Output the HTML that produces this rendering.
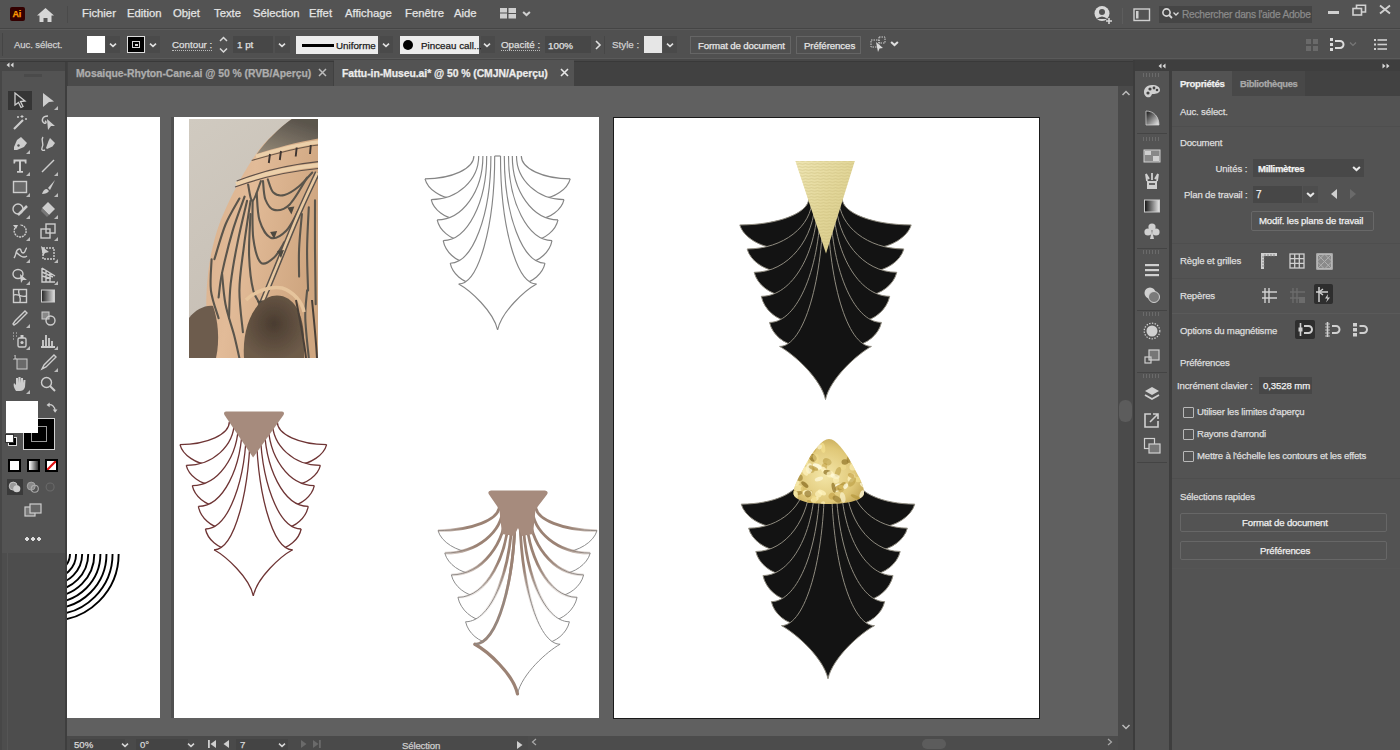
<!DOCTYPE html>
<html><head><meta charset="utf-8"><style>
html,body{margin:0;padding:0;width:1400px;height:750px;overflow:hidden;background:#535353;font-family:"Liberation Sans", sans-serif;}
.b{position:absolute;}
.t{position:absolute;white-space:nowrap;line-height:1.2;-webkit-text-stroke:0.25px currentColor;}
</style></head><body>
<div class="b" style="left:0px;top:0px;width:1400px;height:28px;background:#535353;"></div>
<div class="b" style="left:0px;top:28px;width:1400px;height:1px;background:#454545;"></div>
<div class="b" style="left:0px;top:29px;width:1400px;height:1px;background:#5a5a5a;"></div>
<div class="b" style="left:10px;top:7px;width:15px;height:14px;background:#330000;border-radius:2px;"></div>
<div class="t" style="left:12.5px;top:9.1px;font-size:9px;color:#ff9a00;font-weight:bold;letter-spacing:-0.2px;">Ai</div>
<svg class="b" style="left:36px;top:7px" width="19" height="16" viewBox="0 0 19 16"><path d="M9.5 1 L1 8.5 L3.5 8.5 L3.5 15 L7.5 15 L7.5 11 L11.5 11 L11.5 15 L15.5 15 L15.5 8.5 L18 8.5 Z" fill="#d6d6d6"/></svg>
<div class="b" style="left:67px;top:6px;width:1px;height:17px;background:#4a4a4a;"></div>
<div class="t" style="left:82px;top:6.7px;font-size:11.3px;color:#e4e4e4;font-weight:normal;letter-spacing:0px;">Fichier</div>
<div class="t" style="left:127px;top:6.7px;font-size:11.3px;color:#e4e4e4;font-weight:normal;letter-spacing:0px;">Edition</div>
<div class="t" style="left:173px;top:6.7px;font-size:11.3px;color:#e4e4e4;font-weight:normal;letter-spacing:0px;">Objet</div>
<div class="t" style="left:214px;top:6.7px;font-size:11.3px;color:#e4e4e4;font-weight:normal;letter-spacing:0px;">Texte</div>
<div class="t" style="left:253px;top:6.7px;font-size:11.3px;color:#e4e4e4;font-weight:normal;letter-spacing:0px;">Sélection</div>
<div class="t" style="left:309px;top:6.7px;font-size:11.3px;color:#e4e4e4;font-weight:normal;letter-spacing:0px;">Effet</div>
<div class="t" style="left:345px;top:6.7px;font-size:11.3px;color:#e4e4e4;font-weight:normal;letter-spacing:0px;">Affichage</div>
<div class="t" style="left:405px;top:6.7px;font-size:11.3px;color:#e4e4e4;font-weight:normal;letter-spacing:0px;">Fenêtre</div>
<div class="t" style="left:454px;top:6.7px;font-size:11.3px;color:#e4e4e4;font-weight:normal;letter-spacing:0px;">Aide</div>
<svg class="b" style="left:499px;top:7px" width="18" height="13" viewBox="0 0 18 13"><rect x="1" y="1" width="7" height="4.5" fill="#cfcfcf"/><rect x="1" y="6.5" width="7" height="5" fill="#cfcfcf"/><rect x="9.5" y="1" width="7.5" height="5" fill="#cfcfcf"/><rect x="9.5" y="7" width="7.5" height="4.5" fill="#cfcfcf"/></svg>
<svg class="b" style="left:521.5px;top:8.5px" width="9" height="9" viewBox="0 0 8 8"><path d="M1 2.6 L4 5.4 L7 2.6" fill="none" stroke="#d0d0d0" stroke-width="1.8"/></svg>
<svg class="b" style="left:1093px;top:5px" width="20" height="20" viewBox="0 0 20 20"><circle cx="9" cy="8.5" r="7.5" fill="#d8d8d8"/><circle cx="9" cy="7" r="3" fill="#535353"/><path d="M3.5 14 Q9 9 14.5 14" fill="#535353"/><path d="M13 16 h6 M16 13 v6" stroke="#d8d8d8" stroke-width="1.6"/></svg>
<div class="b" style="left:1122px;top:8px;width:1px;height:16px;background:#5d5d5d;"></div>
<svg class="b" style="left:1133px;top:8px" width="18" height="14" viewBox="0 0 18 14"><rect x="1" y="1" width="15.5" height="11.5" fill="none" stroke="#cfcfcf" stroke-width="1.4"/><rect x="3" y="3" width="2.5" height="7.5" fill="#cfcfcf"/></svg>
<div class="b" style="left:1159px;top:6px;width:153px;height:17px;background:#454545;"></div>
<svg class="b" style="left:1161px;top:7px" width="22" height="14" viewBox="0 0 22 14"><circle cx="5.5" cy="5.5" r="3.6" fill="none" stroke="#d8d8d8" stroke-width="1.6"/><path d="M8 8 L11 11" stroke="#d8d8d8" stroke-width="1.8"/><path d="M12.5 5.5 L15 8 L17.5 5.5" fill="none" stroke="#d8d8d8" stroke-width="1.3"/></svg>
<div class="t" style="left:1182px;top:9.2px;font-size:10.2px;color:#8a8a8a;font-weight:normal;letter-spacing:-0.25px;width:129px;overflow:hidden;white-space:nowrap;">Rechercher dans l'aide Adobe</div>
<div class="b" style="left:1328px;top:11px;width:11px;height:2.5px;background:#d0d0d0;"></div>
<svg class="b" style="left:1352px;top:4px" width="15" height="12" viewBox="0 0 15 12"><rect x="1" y="4.5" width="8.5" height="6.5" fill="none" stroke="#d0d0d0" stroke-width="1.6"/><path d="M4.5 4.5 V1.2 H13.5 V8 H9.5" fill="none" stroke="#d0d0d0" stroke-width="1.6"/></svg>
<svg class="b" style="left:1378px;top:4px" width="14" height="11" viewBox="0 0 14 11"><path d="M2 1.5 L12 9.5 M12 1.5 L2 9.5" stroke="#d0d0d0" stroke-width="1.9"/></svg>
<div class="b" style="left:0px;top:30px;width:1400px;height:28px;background:#505050;"></div>
<div class="b" style="left:0px;top:58px;width:1400px;height:1px;background:#5a5a5a;"></div>
<div class="b" style="left:0px;top:59px;width:1400px;height:2px;background:#474747;"></div>
<div class="b" style="left:0px;top:61px;width:1400px;height:1px;background:#393939;"></div>
<div class="b" style="left:2px;top:33px;width:1px;height:23px;background:#454545;"></div>
<div class="t" style="left:14px;top:39.2px;font-size:9.6px;color:#cfcfcf;font-weight:normal;letter-spacing:-0.1px;">Auc. sélect.</div>
<div class="b" style="left:87px;top:36px;width:18px;height:17px;background:#ffffff;"></div>
<div class="b" style="left:106px;top:36px;width:14px;height:17px;background:#4a4a4a;"></div>
<svg class="b" style="left:109.0px;top:40.5px" width="8" height="8" viewBox="0 0 8 8"><path d="M1 2.6 L4 5.4 L7 2.6" fill="none" stroke="#e0e0e0" stroke-width="1.6"/></svg>
<div class="b" style="left:127px;top:36px;width:18px;height:17px;background:#000000;box-sizing:border-box;border:1px solid #dcdcdc;"></div>
<div class="b" style="left:132px;top:41px;width:8px;height:7px;background:#000;box-sizing:border-box;border:1.5px solid #d8d8d8;"></div>
<div class="b" style="left:134.5px;top:43.5px;width:3px;height:2px;background:#d8d8d8;"></div>
<div class="b" style="left:146px;top:36px;width:14px;height:17px;background:#4a4a4a;"></div>
<svg class="b" style="left:149.0px;top:40.5px" width="8" height="8" viewBox="0 0 8 8"><path d="M1 2.6 L4 5.4 L7 2.6" fill="none" stroke="#e0e0e0" stroke-width="1.6"/></svg>
<div class="t" style="left:172px;top:39.1px;font-size:9.8px;color:#dedede;font-weight:normal;letter-spacing:0px;border-bottom:1px dotted #bbb;line-height:11px;">Contour :</div>
<svg class="b" style="left:218px;top:35px" width="11" height="20" viewBox="0 0 11 20"><path d="M2 6 L5.5 2.5 L9 6 M2 13.5 L5.5 17 L9 13.5" fill="none" stroke="#d8d8d8" stroke-width="1.5"/></svg>
<div class="b" style="left:233px;top:36px;width:40px;height:17px;background:#474747;"></div>
<div class="t" style="left:237px;top:39.1px;font-size:9.8px;color:#e0e0e0;font-weight:normal;letter-spacing:0px;">1 pt</div>
<div class="b" style="left:275px;top:36px;width:15px;height:17px;background:#4a4a4a;"></div>
<svg class="b" style="left:278.0px;top:40.5px" width="8" height="8" viewBox="0 0 8 8"><path d="M1 2.6 L4 5.4 L7 2.6" fill="none" stroke="#e0e0e0" stroke-width="1.6"/></svg>
<div class="b" style="left:296px;top:36px;width:82px;height:18px;background:#ececec;"></div>
<div class="b" style="left:302px;top:43.5px;width:32px;height:3px;background:#000;"></div>
<div class="t" style="left:336px;top:40.1px;font-size:9.8px;color:#1a1a1a;font-weight:normal;letter-spacing:0px;">Uniforme</div>
<div class="b" style="left:380px;top:36px;width:13px;height:17px;background:#4a4a4a;"></div>
<svg class="b" style="left:382.0px;top:40.5px" width="8" height="8" viewBox="0 0 8 8"><path d="M1 2.6 L4 5.4 L7 2.6" fill="none" stroke="#e0e0e0" stroke-width="1.6"/></svg>
<div class="b" style="left:400px;top:36px;width:79px;height:18px;background:#ececec;"></div>
<div class="b" style="left:403px;top:40px;width:10px;height:10px;border-radius:50%;background:#000"></div>
<div class="t" style="left:421px;top:39.6px;font-size:9.8px;color:#1a1a1a;font-weight:normal;letter-spacing:0px;">Pinceau call...</div>
<div class="b" style="left:481px;top:36px;width:14px;height:17px;background:#4a4a4a;"></div>
<svg class="b" style="left:483.0px;top:40.5px" width="8" height="8" viewBox="0 0 8 8"><path d="M1 2.6 L4 5.4 L7 2.6" fill="none" stroke="#e0e0e0" stroke-width="1.6"/></svg>
<div class="t" style="left:501px;top:39.1px;font-size:9.8px;color:#dedede;font-weight:normal;letter-spacing:0px;border-bottom:1px dotted #bbb;line-height:11px;">Opacité :</div>
<div class="b" style="left:545px;top:36px;width:46px;height:17px;background:#474747;"></div>
<div class="t" style="left:548px;top:39.6px;font-size:9.8px;color:#e0e0e0;font-weight:normal;letter-spacing:0px;">100%</div>
<svg class="b" style="left:594px;top:40px" width="8" height="10" viewBox="0 0 8 10"><path d="M2 1 L6 5 L2 9" fill="none" stroke="#e0e0e0" stroke-width="1.6"/></svg>
<div class="b" style="left:604px;top:36px;width:1px;height:18px;background:#474747;"></div>
<div class="t" style="left:612px;top:39.1px;font-size:9.8px;color:#cfcfcf;font-weight:normal;letter-spacing:0px;">Style :</div>
<div class="b" style="left:644px;top:36px;width:18px;height:17px;background:#e6e6e6;"></div>
<div class="b" style="left:663px;top:36px;width:14px;height:17px;background:#4a4a4a;"></div>
<svg class="b" style="left:666.0px;top:40.5px" width="8" height="8" viewBox="0 0 8 8"><path d="M1 2.6 L4 5.4 L7 2.6" fill="none" stroke="#e0e0e0" stroke-width="1.6"/></svg>
<div class="b" style="left:690px;top:36px;width:101px;height:18px;background:transparent;box-sizing:border-box;border:1px solid #656565;"></div>
<div class="t" style="left:698px;top:39.7px;font-size:9.7px;color:#e6e6e6;font-weight:normal;letter-spacing:-0.15px;">Format de document</div>
<div class="b" style="left:796px;top:36px;width:65px;height:18px;background:transparent;box-sizing:border-box;border:1px solid #656565;"></div>
<div class="t" style="left:804px;top:39.7px;font-size:9.7px;color:#e6e6e6;font-weight:normal;letter-spacing:-0.1px;">Préférences</div>
<svg class="b" style="left:870px;top:36px" width="18" height="17" viewBox="0 0 18 17"><rect x="1" y="4" width="8" height="7" fill="none" stroke="#cfcfcf" stroke-width="1" stroke-dasharray="1.5 1"/><rect x="9" y="1" width="6" height="6" fill="none" stroke="#cfcfcf" stroke-width="1" stroke-dasharray="1.5 1"/><path d="M6 6 L13 12 L9.5 12.5 L8 16 Z" fill="#dcdcdc"/></svg>
<svg class="b" style="left:889.5px;top:38.5px" width="9" height="9" viewBox="0 0 8 8"><path d="M1 2.6 L4 5.4 L7 2.6" fill="none" stroke="#e0e0e0" stroke-width="1.8"/></svg>
<svg class="b" style="left:1305px;top:38px" width="14" height="14" viewBox="0 0 14 14"><g fill="#6a6a6a"><rect x="1" y="1" width="5" height="5"/><rect x="8" y="1" width="5" height="5"/><rect x="1" y="8" width="5" height="5"/><rect x="8" y="8" width="5" height="5"/></g></svg>
<svg class="b" style="left:1329px;top:37px" width="16" height="16" viewBox="0 0 16 16"><g fill="#dcdcdc"><rect x="1" y="1" width="3" height="3"/><rect x="1" y="6" width="3" height="3"/><rect x="1" y="11" width="3" height="3"/></g><path d="M6 4 H11 A3.5 3.5 0 0 1 11 11 H6" fill="none" stroke="#dcdcdc" stroke-width="2"/></svg>
<svg class="b" style="left:1349.0px;top:40.0px" width="8" height="8" viewBox="0 0 8 8"><path d="M1 2.6 L4 5.4 L7 2.6" fill="none" stroke="#777" stroke-width="1.3"/></svg>
<svg class="b" style="left:1373px;top:38px" width="15" height="13" viewBox="0 0 15 13"><g fill="#d0d0d0"><rect x="1" y="1" width="2" height="2"/><rect x="1" y="5.5" width="2" height="2"/><rect x="1" y="10" width="2" height="2"/><rect x="4.5" y="1.2" width="9.5" height="1.6"/><rect x="4.5" y="5.7" width="9.5" height="1.6"/><rect x="4.5" y="10.2" width="9.5" height="1.6"/></g></svg>
<div class="b" style="left:67px;top:62px;width:1066px;height:24px;background:#414141;"></div>
<div class="b" style="left:68px;top:62px;width:265px;height:24px;background:#4a4a4a;"></div>
<div class="t" style="left:76px;top:68.3px;font-size:10.4px;color:#adadad;font-weight:bold;letter-spacing:-0.05px;">Mosaique-Rhyton-Cane.ai @ 50 % (RVB/Aperçu)</div>
<svg class="b" style="left:318px;top:68px" width="9" height="9" viewBox="0 0 9 9"><path d="M1 1 L8 8 M8 1 L1 8" stroke="#bcbcbc" stroke-width="1.5"/></svg>
<div class="b" style="left:334px;top:60px;width:240px;height:26px;background:#535353;"></div>
<div class="t" style="left:342px;top:68.3px;font-size:10.4px;color:#ececec;font-weight:bold;letter-spacing:-0.05px;">Fattu-in-Museu.ai* @ 50 % (CMJN/Aperçu)</div>
<svg class="b" style="left:560px;top:68px" width="9" height="9" viewBox="0 0 9 9"><path d="M1 1 L8 8 M8 1 L1 8" stroke="#e6e6e6" stroke-width="1.6"/></svg>
<div class="b" style="left:0px;top:62px;width:67px;height:688px;background:#474747;"></div>
<div class="b" style="left:2px;top:71px;width:63px;height:482px;background:#535353;"></div>
<div class="b" style="left:2px;top:553px;width:63px;height:197px;background:#4d4d4d;"></div>
<div class="b" style="left:7px;top:553px;width:1px;height:197px;background:#555;"></div>
<div class="b" style="left:65px;top:62px;width:2px;height:688px;background:#3e3e3e;"></div>
<svg class="b" style="left:6px;top:62px" width="8" height="6" viewBox="0 0 8 6"><path d="M3.5 0.5 L0.5 3 L3.5 5.5 Z M7.5 0.5 L4.5 3 L7.5 5.5 Z" fill="#d8d8d8"/></svg>
<div class="b" style="left:24px;top:74px;width:18px;height:3px;background:#4a4a4a;"></div>
<div class="b" style="left:67px;top:86px;width:1051px;height:650px;background:#606060;"></div>
<div class="b" style="left:67px;top:117px;width:93px;height:601px;background:#ffffff;"></div>
<div class="b" style="left:171px;top:117px;width:3px;height:601px;background:#505050;"></div>
<div class="b" style="left:174px;top:117px;width:425px;height:601px;background:#ffffff;"></div>
<div class="b" style="left:613px;top:117px;width:427px;height:602px;background:#ffffff;box-sizing:border-box;border:1px solid #1a1a1a;"></div>
<div class="b" style="left:67px;top:736px;width:1051px;height:14px;background:#4a4a4a;"></div>
<div class="b" style="left:1118px;top:86px;width:15px;height:650px;background:#4a4a4a;"></div>
<div class="b" style="left:1118px;top:736px;width:15px;height:14px;background:#4a4a4a;"></div>
<div class="b" style="left:1133px;top:60px;width:2px;height:690px;background:#3c3c3c;"></div>
<div class="b" style="left:1135px;top:60px;width:265px;height:11px;background:#3e3e3e;"></div>
<div class="b" style="left:1135px;top:71px;width:34px;height:679px;background:#535353;"></div>
<div class="b" style="left:1169px;top:71px;width:3px;height:679px;background:#3e3e3e;"></div>
<div class="b" style="left:1172px;top:71px;width:228px;height:679px;background:#535353;"></div>
<div class="b" style="left:1172px;top:71px;width:228px;height:25px;background:#424242;"></div>
<div class="b" style="left:1172px;top:71px;width:60px;height:25px;background:#535353;"></div>
<div class="b" style="left:1232px;top:71px;width:73px;height:25px;background:#484848;"></div>
<div class="t" style="left:1180px;top:78.2px;font-size:9.6px;color:#f0f0f0;font-weight:bold;letter-spacing:-0.3px;">Propriétés</div>
<div class="t" style="left:1240px;top:78.4px;font-size:9.4px;color:#a8a8a8;font-weight:bold;letter-spacing:-0.35px;">Bibliothèques</div>
<div class="b" style="left:7.5px;top:90.5px;width:24px;height:19px;background:#353535"></div>
<svg class="b" style="left:10.5px;top:91.0px" width="18" height="18" viewBox="0 0 18 18"><path d="M4 2 L14 10 L9.5 10.5 L12 15.5 L10 16.5 L7.5 11.5 L4 14 Z" fill="none" stroke="#cdcdcd" stroke-width="1.3"/></svg>
<svg class="b" style="left:38.5px;top:91.0px" width="18" height="18" viewBox="0 0 18 18"><path d="M4 2 L15 10.5 L10 11 L4 16 Z" fill="#cdcdcd"/></svg>
<svg class="b" style="left:53.5px;top:106px" width="4" height="4" viewBox="0 0 4 4"><path d="M4 0 V4 H0 Z" fill="#bbb"/></svg>
<svg class="b" style="left:10.5px;top:113.0px" width="18" height="18" viewBox="0 0 18 18"><path d="M3 16 L12 7" stroke="#cdcdcd" stroke-width="2.2"/><path d="M11 2 v3 M9.5 3.5 h3 M15 5 v2 M14 6 h2 M6 4 h2 M7 3 v2" stroke="#cdcdcd" stroke-width="1"/></svg>
<svg class="b" style="left:38.5px;top:113.0px" width="18" height="18" viewBox="0 0 18 18"><path d="M9 3 C3 3 2 8 5 10 C7 11 8 9 6 8" stroke="#cdcdcd" fill="none" stroke-width="1.4"/><path d="M8 6 L16 13 L12 13 L9 17 Z" fill="#cdcdcd"/></svg>
<svg class="b" style="left:10.5px;top:135.0px" width="18" height="18" viewBox="0 0 18 18"><path d="M10 2 L16 8 L13 12 L6 15 L3 15 L3 12 L6 5 Z" fill="#cdcdcd"/><circle cx="7.5" cy="10.5" r="1.2" fill="#535353"/></svg>
<svg class="b" style="left:25.5px;top:150px" width="4" height="4" viewBox="0 0 4 4"><path d="M4 0 V4 H0 Z" fill="#bbb"/></svg>
<svg class="b" style="left:38.5px;top:135.0px" width="18" height="18" viewBox="0 0 18 18"><path d="M11 3 L16 8 L13.5 11.5 L8 14 L7 13 L9.5 6 Z" fill="#cdcdcd"/><path d="M4 2 C1 6 6 8 3 13 C2 15 4 16 6 15" stroke="#cdcdcd" fill="none" stroke-width="1.4"/></svg>
<svg class="b" style="left:10.5px;top:156.5px" width="18" height="18" viewBox="0 0 18 18"><path d="M2.5 2.5 H15.5 V6.5 H14 L13.5 4.5 H10 V14 H12 V15.8 H6 V14 H8 V4.5 H4.5 L4 6.5 H2.5 Z" fill="#cdcdcd"/></svg>
<svg class="b" style="left:25.5px;top:171.5px" width="4" height="4" viewBox="0 0 4 4"><path d="M4 0 V4 H0 Z" fill="#bbb"/></svg>
<svg class="b" style="left:38.5px;top:156.5px" width="18" height="18" viewBox="0 0 18 18"><path d="M3 15 L15 3" stroke="#cdcdcd" stroke-width="1.5"/></svg>
<svg class="b" style="left:53.5px;top:171.5px" width="4" height="4" viewBox="0 0 4 4"><path d="M4 0 V4 H0 Z" fill="#bbb"/></svg>
<svg class="b" style="left:10.5px;top:178.0px" width="18" height="18" viewBox="0 0 18 18"><rect x="2.5" y="3.5" width="13" height="11" fill="#6a6a6a" stroke="#cdcdcd" stroke-width="1.4"/></svg>
<svg class="b" style="left:25.5px;top:193px" width="4" height="4" viewBox="0 0 4 4"><path d="M4 0 V4 H0 Z" fill="#bbb"/></svg>
<svg class="b" style="left:38.5px;top:178.0px" width="18" height="18" viewBox="0 0 18 18"><path d="M16 2 L9 10 L11 12 Z" fill="#cdcdcd"/><path d="M8 11 C5 11 4 13 3 16 C6 16 9 15 10 13 Z" fill="#cdcdcd"/></svg>
<svg class="b" style="left:53.5px;top:193px" width="4" height="4" viewBox="0 0 4 4"><path d="M4 0 V4 H0 Z" fill="#bbb"/></svg>
<svg class="b" style="left:10.5px;top:200.0px" width="18" height="18" viewBox="0 0 18 18"><circle cx="7" cy="9" r="5" stroke="#cdcdcd" fill="none" stroke-width="1.4"/><path d="M7 15 L16 6" stroke="#cdcdcd" stroke-width="2.5"/></svg>
<svg class="b" style="left:25.5px;top:215px" width="4" height="4" viewBox="0 0 4 4"><path d="M4 0 V4 H0 Z" fill="#bbb"/></svg>
<svg class="b" style="left:38.5px;top:200.0px" width="18" height="18" viewBox="0 0 18 18"><path d="M9 2 L16 9 L10 15 L3 8 Z" fill="#cdcdcd"/><path d="M3 8 L10 15 L8 17 L2 11 Z" fill="#777"/></svg>
<svg class="b" style="left:53.5px;top:215px" width="4" height="4" viewBox="0 0 4 4"><path d="M4 0 V4 H0 Z" fill="#bbb"/></svg>
<svg class="b" style="left:10.5px;top:222.0px" width="18" height="18" viewBox="0 0 18 18"><path d="M4 6 A6 6 0 1 0 9 3" stroke="#cdcdcd" fill="none" stroke-width="1.4" stroke-dasharray="2 0.8"/><path d="M2 3 L5 7 L7 3 Z" fill="#cdcdcd"/></svg>
<svg class="b" style="left:25.5px;top:237px" width="4" height="4" viewBox="0 0 4 4"><path d="M4 0 V4 H0 Z" fill="#bbb"/></svg>
<svg class="b" style="left:38.5px;top:222.0px" width="18" height="18" viewBox="0 0 18 18"><rect x="2" y="7" width="9" height="9" stroke="#cdcdcd" fill="none" stroke-width="1.4"/><rect x="7" y="2" width="9" height="9" stroke="#cdcdcd" fill="none" stroke-width="1.4"/></svg>
<svg class="b" style="left:53.5px;top:237px" width="4" height="4" viewBox="0 0 4 4"><path d="M4 0 V4 H0 Z" fill="#bbb"/></svg>
<svg class="b" style="left:10.5px;top:244.0px" width="18" height="18" viewBox="0 0 18 18"><path d="M3 14 C6 10 4 6 8 5 C11 4 9 9 12 9 C15 9 14 4 16 4 M5 8 C8 11 12 15 16 12" stroke="#cdcdcd" fill="none" stroke-width="1.4"/></svg>
<svg class="b" style="left:25.5px;top:259px" width="4" height="4" viewBox="0 0 4 4"><path d="M4 0 V4 H0 Z" fill="#bbb"/></svg>
<svg class="b" style="left:38.5px;top:244.0px" width="18" height="18" viewBox="0 0 18 18"><rect x="4" y="4" width="11" height="11" stroke="#cdcdcd" fill="none" stroke-width="1.4" stroke-dasharray="2 1"/><path d="M2 2 L10 8 L6 9 L4 12 Z" fill="#cdcdcd"/></svg>
<svg class="b" style="left:53.5px;top:259px" width="4" height="4" viewBox="0 0 4 4"><path d="M4 0 V4 H0 Z" fill="#bbb"/></svg>
<svg class="b" style="left:10.5px;top:265.5px" width="18" height="18" viewBox="0 0 18 18"><ellipse cx="7" cy="8" rx="5" ry="4.5" stroke="#cdcdcd" fill="none" stroke-width="1.4"/><path d="M9 8 L16 14 L12 14 L10 17 Z" fill="#cdcdcd"/></svg>
<svg class="b" style="left:25.5px;top:280.5px" width="4" height="4" viewBox="0 0 4 4"><path d="M4 0 V4 H0 Z" fill="#bbb"/></svg>
<svg class="b" style="left:38.5px;top:265.5px" width="18" height="18" viewBox="0 0 18 18"><path d="M3 2 V16 H16 M3 2 L16 10 M3 6 L14 11 M3 10 L12 12.5 M7 4.5 V16 M11 7 V16" stroke="#cdcdcd" fill="none" stroke-width="1.4" stroke-width="1.1"/></svg>
<svg class="b" style="left:53.5px;top:280.5px" width="4" height="4" viewBox="0 0 4 4"><path d="M4 0 V4 H0 Z" fill="#bbb"/></svg>
<svg class="b" style="left:10.5px;top:287.0px" width="18" height="18" viewBox="0 0 18 18"><rect x="2.5" y="2.5" width="13" height="13" stroke="#cdcdcd" fill="none" stroke-width="1.4"/><path d="M2.5 8 C7 6 10 11 15.5 9 M8 2.5 C6 7 11 10 9 15.5" stroke="#cdcdcd" fill="none" stroke-width="1.4" stroke-width="1"/></svg>
<svg class="b" style="left:38.5px;top:287.0px" width="18" height="18" viewBox="0 0 18 18"><defs><linearGradient id="tg" x1="0" x2="1"><stop offset="0" stop-color="#222"/><stop offset="1" stop-color="#e0e0e0"/></linearGradient></defs><rect x="2.5" y="3" width="13" height="12" fill="url(#tg)" stroke="#cdcdcd" stroke-width="1"/></svg>
<svg class="b" style="left:10.5px;top:309.0px" width="18" height="18" viewBox="0 0 18 18"><path d="M14 2 L16 4 L13 7 L6 14 L3 16 L2 15 L4 12 L11 5 Z" stroke="#cdcdcd" fill="none" stroke-width="1.4"/></svg>
<svg class="b" style="left:25.5px;top:324px" width="4" height="4" viewBox="0 0 4 4"><path d="M4 0 V4 H0 Z" fill="#bbb"/></svg>
<svg class="b" style="left:38.5px;top:309.0px" width="18" height="18" viewBox="0 0 18 18"><rect x="3" y="3" width="7" height="7" fill="#888" stroke="#cdcdcd" stroke-width="1"/><circle cx="11.5" cy="11.5" r="4.5" stroke="#cdcdcd" fill="none" stroke-width="1.4"/></svg>
<svg class="b" style="left:10.5px;top:331.0px" width="18" height="18" viewBox="0 0 18 18"><rect x="7" y="7" width="8" height="9" rx="1.5" stroke="#cdcdcd" fill="none" stroke-width="1.4"/><circle cx="11" cy="11.5" r="1.6" fill="#cdcdcd"/><rect x="9.5" y="4" width="3" height="3" fill="#cdcdcd"/><path d="M2 2 h1 M5 2 h1 M2 5 h1 M2 8 h1 M5 5 h1" stroke="#cdcdcd" stroke-width="1.2"/></svg>
<svg class="b" style="left:25.5px;top:346px" width="4" height="4" viewBox="0 0 4 4"><path d="M4 0 V4 H0 Z" fill="#bbb"/></svg>
<svg class="b" style="left:38.5px;top:331.0px" width="18" height="18" viewBox="0 0 18 18"><path d="M2 16 H16 M4 15 V9 M7 15 V4 M10 15 V7 M13 15 V10" stroke="#cdcdcd" stroke-width="1.8"/></svg>
<svg class="b" style="left:53.5px;top:346px" width="4" height="4" viewBox="0 0 4 4"><path d="M4 0 V4 H0 Z" fill="#bbb"/></svg>
<svg class="b" style="left:10.5px;top:353.0px" width="18" height="18" viewBox="0 0 18 18"><rect x="6" y="6" width="10" height="10" fill="#6a6a6a" stroke="#cdcdcd" stroke-width="1"/><path d="M4 2 V6 H2 M4 6 H6" stroke="#cdcdcd" stroke-width="1.2"/></svg>
<svg class="b" style="left:38.5px;top:353.0px" width="18" height="18" viewBox="0 0 18 18"><path d="M15 2 L17 4 L7 14 L3 16 L5 12 Z" stroke="#cdcdcd" fill="none" stroke-width="1.4"/></svg>
<svg class="b" style="left:53.5px;top:368px" width="4" height="4" viewBox="0 0 4 4"><path d="M4 0 V4 H0 Z" fill="#bbb"/></svg>
<svg class="b" style="left:10.5px;top:375.0px" width="18" height="18" viewBox="0 0 18 18"><path d="M5 16 C3 13 2 10 3 8 L5 10 L5 3 L7 3 L7 8 L7.5 2 L9.5 2 L9.5 8 L10 3 L12 3 L12 8 L12.5 5 L14.5 5 L14 12 C13 15 11 16 9 16 Z" fill="#cdcdcd"/></svg>
<svg class="b" style="left:25.5px;top:390px" width="4" height="4" viewBox="0 0 4 4"><path d="M4 0 V4 H0 Z" fill="#bbb"/></svg>
<svg class="b" style="left:38.5px;top:375.0px" width="18" height="18" viewBox="0 0 18 18"><circle cx="7.5" cy="7.5" r="5" stroke="#cdcdcd" fill="none" stroke-width="1.4" stroke-width="1.6"/><path d="M11 11 L16 16" stroke="#cdcdcd" stroke-width="2"/></svg>
<div class="b" style="left:23px;top:418px;width:32px;height:32px;background:#000;box-sizing:border-box;border:1px solid #d0d0d0"></div>
<div class="b" style="left:31px;top:426px;width:16px;height:16px;box-sizing:border-box;border:1.5px solid #9a9a9a"></div>
<div class="b" style="left:6px;top:401px;width:32px;height:32px;background:#fff"></div>
<svg class="b" style="left:44.5px;top:400.5px" width="14" height="14" viewBox="0 0 18 18"><path d="M4 5 C9 4 13 7 13 13" fill="none" stroke="#cdcdcd" stroke-width="1.6"/><path d="M10 11 L13 15 L16 11 Z M6 2 L2 5 L6 8 Z" fill="#cdcdcd"/></svg>
<div class="b" style="left:8px;top:437px;width:7px;height:7px;background:#000;border:1px solid #ddd"></div>
<div class="b" style="left:5px;top:434px;width:7px;height:7px;background:#fff;border:1px solid #333"></div>
<div class="b" style="left:8px;top:459px;width:13px;height:13px;background:#000"></div>
<div class="b" style="left:10px;top:461px;width:9px;height:9px;background:#fff"></div>
<div class="b" style="left:26.5px;top:459px;width:13px;height:13px;background:#000"></div>
<div class="b" style="left:28.5px;top:461px;width:9px;height:9px;background:linear-gradient(90deg,#fff,#333)"></div>
<div class="b" style="left:45px;top:459px;width:13px;height:13px;background:#000"></div>
<svg class="b" style="left:47px;top:461px" width="9" height="9" viewBox="0 0 9 9"><rect width="9" height="9" fill="#fff"/><path d="M0 9 L9 0" stroke="#e01010" stroke-width="2.2"/></svg>
<div class="b" style="left:6.5px;top:479px;width:16px;height:16px;background:#3a3a3a"></div>
<svg class="b" style="left:6.5px;top:479.0px" width="16" height="16" viewBox="0 0 18 18"><circle cx="7" cy="8" r="4.5" fill="#999" stroke="#cdcdcd" stroke-width="1"/><circle cx="11" cy="11" r="4" fill="#cdcdcd"/></svg>
<svg class="b" style="left:25.0px;top:479.0px" width="16" height="16" viewBox="0 0 18 18"><circle cx="7" cy="8" r="4.5" fill="#888" stroke="#aaa" stroke-width="1"/><circle cx="11" cy="11" r="4" fill="none" stroke="#aaa" stroke-width="1.2"/></svg>
<svg class="b" style="left:43.0px;top:479.0px" width="16" height="16" viewBox="0 0 18 18"><circle cx="8" cy="9" r="4.5" fill="none" stroke="#6a6a6a" stroke-width="1.2"/></svg>
<svg class="b" style="left:23.0px;top:502.0px" width="20" height="18" viewBox="0 0 18 18"><rect x="1" y="5" width="10" height="9" fill="#777" stroke="#cdcdcd" stroke-width="1.2"/><rect x="6" y="2" width="11" height="9" fill="#666" stroke="#cdcdcd" stroke-width="1.2"/></svg>
<div class="b" style="left:25px;top:537px;width:17px;height:4px;background:radial-gradient(circle at 2px 2px,#ddd 1.6px,transparent 1.8px) 0 0/6px 4px"></div>
<svg class="b" style="left:189px;top:119px" width="129" height="239" viewBox="189 119 129 239">
<defs>
<linearGradient id="pbg" x1="0" y1="0" x2="0.4" y2="1"><stop offset="0" stop-color="#d0cac0"/><stop offset="1" stop-color="#c6beb4"/></linearGradient>
<linearGradient id="pbody" x1="0" y1="0" x2="1" y2="0.4"><stop offset="0" stop-color="#d8b08c"/><stop offset="0.45" stop-color="#e2bb98"/><stop offset="1" stop-color="#cfa680"/></linearGradient>
<linearGradient id="pdome" x1="0" y1="1" x2="0.6" y2="0"><stop offset="0" stop-color="#968a78"/><stop offset="1" stop-color="#5a544c"/></linearGradient>
<filter id="pblur" x="-5%" y="-5%" width="110%" height="110%"><feGaussianBlur stdDeviation="0.75"/></filter>
<radialGradient id="pblob" cx="0.5" cy="0.45" r="0.6"><stop offset="0" stop-color="#4a3c30"/><stop offset="1" stop-color="#6e5c4a"/></radialGradient>
</defs>
<rect x="189" y="119" width="129" height="239" fill="url(#pbg)"/>
<g filter="url(#pblur)">
<path d="M291.7 119 C276 131 264 142 256.7 153.3 C246 168 234 190 223.7 213.3 C216 230 210 255 208 274 C206.5 288 206.3 300 206.3 304 L207 358 L318.3 358 L318.3 119 Z" fill="url(#pbody)"/>
<path d="M291.7 119 C278 129 266 141 256.7 154 C275 148 298 142 318.3 138.5 L318.3 119 Z" fill="url(#pdome)"/>
<path d="M256 156.5 C276 150.5 298 144.5 318.3 142" fill="none" stroke="#ecd0aa" stroke-width="3.5"/>
<path d="M251.7 160.5 C274 154 298 147.5 318.3 145" fill="none" stroke="#6a5848" stroke-width="1.1"/>
<path d="M236 184 C262 174 292 167.5 318.3 165" fill="none" stroke="#ecd0aa" stroke-width="4"/>
<path d="M236.7 181 C262 171 292 164.5 318.3 161.7 M235 187 C262 177 292 171 318.3 168.5" fill="none" stroke="#5e5048" stroke-width="1.2"/>
<path d="M270 154 l-1.2 9 M281 151 l-1.2 9 M296.7 147.5 l-1 9 M310.8 145 l-0.8 9" stroke="#3e3430" stroke-width="1.9"/>
<g fill="none" stroke="#5a544c" stroke-width="2.1" stroke-linecap="round"><path d="M248.1 184.6 C248.8 187.3 250.4 201.5 252.6 200.9 C254.7 200.3 259.5 184.4 260.9 181.1"/><path d="M263.0 181.1 C263.4 184.2 263.6 194.7 265.4 199.5 C267.3 204.3 270.0 209.1 274.1 209.9 C278.1 210.7 284.2 209.8 289.7 204.4 C295.2 199.0 304.2 182.1 307.1 177.7"/><path d="M267.8 179.4 C268.8 181.6 270.6 190.0 273.4 192.6 C276.2 195.2 280.2 196.1 284.5 195.0 C288.8 194.0 294.5 190.1 299.1 186.3 C303.7 182.6 310.1 174.8 312.3 172.5"/><path d="M256.7 193.3 C257.2 197.8 257.2 212.9 259.5 220.3 C261.8 227.7 266.2 236.0 270.6 237.7 C275.1 239.4 281.6 235.3 286.2 230.7 C290.9 226.2 296.4 214.0 298.4 210.6"/><path d="M252.6 200.9 C252.7 207.2 251.9 228.1 253.3 238.4 C254.7 248.7 257.4 259.5 260.9 262.7 C264.4 265.9 270.2 260.9 274.1 257.5 C278.0 254.0 282.8 244.5 284.5 241.9"/><path d="M250.5 214.1 C250.3 221.0 248.6 243.0 249.1 255.7 C249.6 268.5 251.1 282.0 253.3 290.4 C255.4 298.8 260.5 303.4 262.0 306.0"/><path d="M244.6 196.7 C242.6 202.5 236.2 218.7 232.5 231.4 C228.7 244.2 224.4 262.1 222.0 273.1 C219.7 284.1 219.2 293.3 218.6 297.4"/><path d="M239.4 198.5 C237.1 202.8 229.7 214.4 225.5 224.5 C221.4 234.6 216.3 253.4 214.4 259.2"/><path d="M247.0 200.9 C245.5 207.7 240.4 228.1 237.7 241.9 C234.9 255.6 232.2 270.8 230.7 283.5 C229.3 296.2 229.3 312.4 229.0 318.2"/><path d="M250.5 200.9 C249.3 208.9 245.4 233.9 243.6 248.8 C241.7 263.7 239.5 276.6 239.4 290.4 C239.3 304.3 242.3 325.1 242.9 332.1"/><path d="M222.0 273.1 C222.6 278.3 223.5 293.9 225.5 304.3 C227.5 314.7 231.9 326.6 234.2 335.5 C236.5 344.5 238.5 354.3 239.4 358.1"/><path d="M211.6 259.2 C211.5 264.4 209.8 280.6 210.9 290.4 C212.1 300.3 217.3 313.6 218.6 318.2"/><path d="M301.9 214.1 C301.4 219.9 299.5 238.4 299.1 248.8 C298.6 259.2 299.1 271.9 299.1 276.6"/><path d="M308.8 207.2 C308.5 214.1 307.2 234.9 307.1 248.8 C306.9 262.7 307.9 283.5 308.1 290.4"/><path d="M315.0 200.2 C315.0 208.3 314.9 231.4 315.0 248.8 C315.2 266.1 315.6 295.1 315.7 304.3"/><path d="M307.1 290.4 C306.8 295.1 305.0 306.9 305.3 318.2 C305.6 329.5 308.2 351.4 308.8 358.1"/></g><path d="M317.5 172.5 C314.3 179.4 305.6 197.3 298.4 214.1 C291.2 230.9 282.2 253.4 274.1 273.1 C266.0 292.7 253.9 322.2 249.8 332.1" fill="none" stroke="#5a524c" stroke-width="5.5"/><path d="M317.5 172.5 C314.3 179.4 305.6 197.3 298.4 214.1 C291.2 230.9 282.2 253.4 274.1 273.1 C266.0 292.7 253.9 322.2 249.8 332.1" fill="none" stroke="#e8c8a0" stroke-width="2.6"/><path d="M277.0 251.0 L284.0 250.0 L281.0 258.0 Z" fill="#4e4840"/><path d="M256.9 301.3 L263.9 300.3 L260.9 308.3 Z" fill="#4e4840"/><path d="M287.4 207.6 L294.4 206.6 L291.4 214.6 Z" fill="#4e4840"/><path d="M270.1 231.9 L277.1 230.9 L274.1 238.9 Z" fill="#4e4840"/>




<path d="M246 300 C256 290 272 286 282 288 C294 292 302 302 304 312" fill="none" stroke="#e6c49c" stroke-width="3.5"/>
<path d="M244 358 C242 330 252 302 272 296 C292 292 304 312 304 340 L304 358 Z" fill="url(#pblob)"/>
<path d="M189 318 C195 310 205 305 213 306 C218 320 220 340 216 358 L189 358 Z" fill="#6d5c4e"/>
<path d="M296 300 C300 320 304 340 306 358 M312 300 C314 320 316 340 317 358" fill="none" stroke="#4a4038" stroke-width="2"/>
</g>
</svg>
<svg class="b" style="left:67px;top:550px" width="60" height="75" viewBox="67 550 60 75"><g fill="none" stroke="#000" stroke-width="1.9"><path d="M70.00 554 A18.00 18.00 0 0 1 52 572.00"/><path d="M76.08 554 A24.08 24.08 0 0 1 52 578.08"/><path d="M82.16 554 A30.16 30.16 0 0 1 52 584.16"/><path d="M88.24 554 A36.24 36.24 0 0 1 52 590.24"/><path d="M94.32 554 A42.32 42.32 0 0 1 52 596.32"/><path d="M100.40 554 A48.40 48.40 0 0 1 52 602.40"/><path d="M106.48 554 A54.48 54.48 0 0 1 52 608.48"/><path d="M112.56 554 A60.56 60.56 0 0 1 52 614.56"/><path d="M118.64 554 A66.64 66.64 0 0 1 52 620.64"/></g></svg>
<svg class="b" style="left:0;top:0" width="1118" height="736" viewBox="0 0 1118 736">
<defs>
<radialGradient id="gstroke" gradientUnits="userSpaceOnUse" cx="517" cy="515" r="115" fx="517" fy="515"><stop offset="0" stop-color="#9b8274" stop-opacity="1"/><stop offset="0.45" stop-color="#9b8274" stop-opacity="1"/><stop offset="0.72" stop-color="#9b8274" stop-opacity="0.25"/><stop offset="1" stop-color="#9b8274" stop-opacity="0"/></radialGradient>
<linearGradient id="gt" x1="0" y1="0" x2="1" y2="1"><stop offset="0" stop-color="#efe6b4"/><stop offset="0.5" stop-color="#e2d698"/><stop offset="1" stop-color="#d6c888"/></linearGradient>
<pattern id="gtex" width="6" height="3" patternUnits="userSpaceOnUse"><rect width="6" height="3" fill="none"/><path d="M0 2 C2 1 4 3 6 2" stroke="#c9bb7a" stroke-width="0.5" fill="none"/></pattern>
<radialGradient id="gh" cx="0.45" cy="0.55" r="0.7"><stop offset="0" stop-color="#f4e6a8"/><stop offset="0.6" stop-color="#e0c878"/><stop offset="1" stop-color="#b89a48"/></radialGradient>
<pattern id="ham" width="9" height="8" patternUnits="userSpaceOnUse"><circle cx="3" cy="3" r="2.2" fill="#fff6c8" opacity="0.6"/><circle cx="7" cy="6.5" r="1.8" fill="#7a5c20" opacity="0.45"/></pattern>
</defs>
<path d="M473.90,156.00 C473.90,168.59 451.99,178.80 425.00,178.80 C427.77,189.65 441.62,198.13 452.70,198.52 L497.60,200.52 L542.50,198.52 C553.58,198.13 567.43,189.65 570.20,178.80 C543.21,178.80 521.30,168.59 521.30,156.00 Z" fill="#fff"/>
<path d="M425.00,178.80 C427.77,189.65 441.62,198.13 452.70,198.52 M570.20,178.80 C567.43,189.65 553.58,198.13 542.50,198.52" fill="none" stroke="#858585" stroke-width="1.15"/>
<path d="M473.90,156.00 C473.90,168.59 451.99,178.80 425.00,178.80 M521.30,156.00 C521.30,168.59 543.21,178.80 570.20,178.80" fill="none" stroke="#858585" stroke-width="1.15"/>
<path d="M478.70,156.00 C478.70,180.07 457.42,199.60 431.20,199.60 C433.64,210.15 445.85,218.40 455.61,218.78 L497.60,220.78 L539.59,218.78 C549.35,218.40 561.56,210.15 564.00,199.60 C537.78,199.60 516.50,180.07 516.50,156.00 Z" fill="#fff"/>
<path d="M431.20,199.60 C433.64,210.15 445.85,218.40 455.61,218.78 M564.00,199.60 C561.56,210.15 549.35,218.40 539.59,218.78" fill="none" stroke="#858585" stroke-width="1.15"/>
<path d="M478.70,156.00 C478.70,180.07 457.42,199.60 431.20,199.60 M516.50,156.00 C516.50,180.07 537.78,199.60 564.00,199.60" fill="none" stroke="#858585" stroke-width="1.15"/>
<path d="M482.90,156.00 C482.90,191.22 462.43,219.80 437.20,219.80 C439.46,230.65 450.75,239.13 459.79,239.52 L497.60,241.52 L535.41,239.52 C544.45,239.13 555.74,230.65 558.00,219.80 C532.77,219.80 512.30,191.22 512.30,156.00 Z" fill="#fff"/>
<path d="M437.20,219.80 C439.46,230.65 450.75,239.13 459.79,239.52 M558.00,219.80 C555.74,230.65 544.45,239.13 535.41,239.52" fill="none" stroke="#858585" stroke-width="1.15"/>
<path d="M482.90,156.00 C482.90,191.22 462.43,219.80 437.20,219.80 M512.30,156.00 C512.30,191.22 532.77,219.80 558.00,219.80" fill="none" stroke="#858585" stroke-width="1.15"/>
<path d="M486.70,156.00 C486.70,202.70 467.21,240.60 443.20,240.60 C445.43,252.34 456.59,261.51 465.51,261.94 L497.60,263.94 L529.69,261.94 C538.61,261.51 549.77,252.34 552.00,240.60 C527.99,240.60 508.50,202.70 508.50,156.00 Z" fill="#fff"/>
<path d="M443.20,240.60 C445.43,252.34 456.59,261.51 465.51,261.94 M552.00,240.60 C549.77,252.34 538.61,261.51 529.69,261.94" fill="none" stroke="#858585" stroke-width="1.15"/>
<path d="M486.70,156.00 C486.70,202.70 467.21,240.60 443.20,240.60 M508.50,156.00 C508.50,202.70 527.99,240.60 552.00,240.60" fill="none" stroke="#858585" stroke-width="1.15"/>
<path d="M490.90,156.00 C490.90,215.17 472.67,263.20 450.20,263.20 C452.40,274.05 463.38,282.53 472.16,282.92 L497.60,284.92 L523.04,282.92 C531.82,282.53 542.80,274.05 545.00,263.20 C522.53,263.20 504.30,215.17 504.30,156.00 Z" fill="#fff"/>
<path d="M450.20,263.20 C452.40,274.05 463.38,282.53 472.16,282.92 M545.00,263.20 C542.80,274.05 531.82,282.53 523.04,282.92" fill="none" stroke="#858585" stroke-width="1.15"/>
<path d="M490.90,156.00 C490.90,215.17 472.67,263.20 450.20,263.20 M504.30,156.00 C504.30,215.17 522.53,263.20 545.00,263.20" fill="none" stroke="#858585" stroke-width="1.15"/>
<path d="M494.70,156.00 C494.70,226.66 478.57,284.00 458.70,284.00 C470.37,290.44 493.71,311.60 497.60,330.00 C501.49,311.60 524.83,290.44 536.50,284.00 C516.63,284.00 500.50,226.66 500.50,156.00 Z" fill="#fff"/>
<path d="M458.70,284.00 C470.37,290.44 493.71,311.60 497.60,330.00 M536.50,284.00 C524.83,290.44 501.49,311.60 497.60,330.00" fill="none" stroke="#858585" stroke-width="1.15"/>
<path d="M494.70,156.00 C494.70,226.66 478.57,284.00 458.70,284.00 M500.50,156.00 C500.50,226.66 516.63,284.00 536.50,284.00" fill="none" stroke="#858585" stroke-width="1.15"/>
<path d="M494.70,156.00 L500.50,156.00" fill="none" stroke="#858585" stroke-width="1.15"/>
<path d="M229.36,421.80 C229.36,434.39 207.24,444.60 179.97,444.60 C182.77,455.45 196.76,463.93 207.95,464.32 L253.30,466.32 L298.65,464.32 C309.84,463.93 323.83,455.45 326.63,444.60 C299.36,444.60 277.24,434.39 277.24,421.80 Z" fill="#fff"/>
<path d="M179.97,444.60 C182.77,455.45 196.76,463.93 207.95,464.32 M326.63,444.60 C323.83,455.45 309.84,463.93 298.65,464.32" fill="none" stroke="#6e3434" stroke-width="1.3"/>
<path d="M229.36,421.80 C229.36,434.39 207.24,444.60 179.97,444.60 M277.24,421.80 C277.24,434.39 299.36,444.60 326.63,444.60" fill="none" stroke="#6e3434" stroke-width="1.3"/>
<path d="M234.21,421.80 C234.21,445.87 212.72,465.40 186.24,465.40 C188.70,475.95 201.03,484.20 210.89,484.58 L253.30,486.58 L295.71,484.58 C305.57,484.20 317.90,475.95 320.36,465.40 C293.88,465.40 272.39,445.87 272.39,421.80 Z" fill="#fff"/>
<path d="M186.24,465.40 C188.70,475.95 201.03,484.20 210.89,484.58 M320.36,465.40 C317.90,475.95 305.57,484.20 295.71,484.58" fill="none" stroke="#6e3434" stroke-width="1.3"/>
<path d="M234.21,421.80 C234.21,445.87 212.72,465.40 186.24,465.40 M272.39,421.80 C272.39,445.87 293.88,465.40 320.36,465.40" fill="none" stroke="#6e3434" stroke-width="1.3"/>
<path d="M238.45,421.80 C238.45,457.02 217.77,485.60 192.30,485.60 C194.58,496.45 205.98,504.93 215.11,505.32 L253.30,507.32 L291.49,505.32 C300.62,504.93 312.02,496.45 314.30,485.60 C288.83,485.60 268.15,457.02 268.15,421.80 Z" fill="#fff"/>
<path d="M192.30,485.60 C194.58,496.45 205.98,504.93 215.11,505.32 M314.30,485.60 C312.02,496.45 300.62,504.93 291.49,505.32" fill="none" stroke="#6e3434" stroke-width="1.3"/>
<path d="M238.45,421.80 C238.45,457.02 217.77,485.60 192.30,485.60 M268.15,421.80 C268.15,457.02 288.83,485.60 314.30,485.60" fill="none" stroke="#6e3434" stroke-width="1.3"/>
<path d="M242.29,421.80 C242.29,468.50 222.61,506.40 198.36,506.40 C200.61,518.14 211.88,527.31 220.89,527.74 L253.30,529.74 L285.71,527.74 C294.72,527.31 305.99,518.14 308.24,506.40 C283.99,506.40 264.31,468.50 264.31,421.80 Z" fill="#fff"/>
<path d="M198.36,506.40 C200.61,518.14 211.88,527.31 220.89,527.74 M308.24,506.40 C305.99,518.14 294.72,527.31 285.71,527.74" fill="none" stroke="#6e3434" stroke-width="1.3"/>
<path d="M242.29,421.80 C242.29,468.50 222.61,506.40 198.36,506.40 M264.31,421.80 C264.31,468.50 283.99,506.40 308.24,506.40" fill="none" stroke="#6e3434" stroke-width="1.3"/>
<path d="M246.53,421.80 C246.53,480.97 228.12,529.00 205.43,529.00 C207.64,539.85 218.74,548.33 227.61,548.72 L253.30,550.72 L278.99,548.72 C287.86,548.33 298.96,539.85 301.17,529.00 C278.48,529.00 260.07,480.97 260.07,421.80 Z" fill="#fff"/>
<path d="M205.43,529.00 C207.64,539.85 218.74,548.33 227.61,548.72 M301.17,529.00 C298.96,539.85 287.86,548.33 278.99,548.72" fill="none" stroke="#6e3434" stroke-width="1.3"/>
<path d="M246.53,421.80 C246.53,480.97 228.12,529.00 205.43,529.00 M260.07,421.80 C260.07,480.97 278.48,529.00 301.17,529.00" fill="none" stroke="#6e3434" stroke-width="1.3"/>
<path d="M250.37,421.80 C250.37,492.46 234.08,549.80 214.01,549.80 C225.80,556.24 249.37,577.40 253.30,595.80 C257.23,577.40 280.80,556.24 292.59,549.80 C272.52,549.80 256.23,492.46 256.23,421.80 Z" fill="#fff"/>
<path d="M214.01,549.80 C225.80,556.24 249.37,577.40 253.30,595.80 M292.59,549.80 C280.80,556.24 257.23,577.40 253.30,595.80" fill="none" stroke="#6e3434" stroke-width="1.3"/>
<path d="M250.37,421.80 C250.37,492.46 234.08,549.80 214.01,549.80 M256.23,421.80 C256.23,492.46 272.52,549.80 292.59,549.80" fill="none" stroke="#6e3434" stroke-width="1.3"/>
<path d="M250.37,421.80 L256.23,421.80" fill="none" stroke="#6e3434" stroke-width="1.3"/>
<path d="M226 411.5 H282 Q285 412 283.5 415 L253.1 457.5 L224.5 415 Q223 412 226 411.5 Z" fill="#a68b7d"/>
<path d="M499.33,506.00 C499.33,519.59 471.86,530.62 438.00,530.62 C441.23,542.34 457.34,551.50 470.23,551.92 L517.50,554.08 L564.77,551.92 C577.66,551.50 593.77,542.34 597.00,530.62 C563.14,530.62 535.67,519.59 535.67,506.00 Z" fill="#fff"/>
<path d="M438.00,530.62 C441.23,542.34 457.34,551.50 470.23,551.92 M597.00,530.62 C593.77,542.34 577.66,551.50 564.77,551.92" fill="none" stroke="#8d8d8d" stroke-width="1.0"/>
<path d="M499.33,506.00 C499.33,519.59 471.86,530.62 438.00,530.62 M535.67,506.00 C535.67,519.59 563.14,530.62 597.00,530.62" fill="none" stroke="#8d8d8d" stroke-width="1.0"/>
<path d="M499.33,506.00 C499.33,519.59 471.86,530.62 438.00,530.62 M535.67,506.00 C535.67,519.59 563.14,530.62 597.00,530.62" fill="none" stroke="url(#gstroke)" stroke-width="2.8"/>
<path d="M503.01,506.00 C503.01,531.99 476.93,553.09 444.79,553.09 C447.59,564.48 461.55,573.39 472.72,573.80 L517.50,575.96 L562.28,573.80 C573.45,573.39 587.41,564.48 590.21,553.09 C558.07,553.09 531.99,531.99 531.99,506.00 Z" fill="#fff"/>
<path d="M444.79,553.09 C447.59,564.48 461.55,573.39 472.72,573.80 M590.21,553.09 C587.41,564.48 573.45,573.39 562.28,573.80" fill="none" stroke="#8d8d8d" stroke-width="1.0"/>
<path d="M503.01,506.00 C503.01,531.99 476.93,553.09 444.79,553.09 M531.99,506.00 C531.99,531.99 558.07,553.09 590.21,553.09" fill="none" stroke="#8d8d8d" stroke-width="1.0"/>
<path d="M503.01,506.00 C503.01,531.99 476.93,553.09 444.79,553.09 M531.99,506.00 C531.99,531.99 558.07,553.09 590.21,553.09" fill="none" stroke="url(#gstroke)" stroke-width="2.8"/>
<path d="M506.23,506.00 C506.23,544.04 481.65,574.90 451.36,574.90 C453.91,586.62 466.67,595.78 476.88,596.20 L517.50,598.36 L558.12,596.20 C568.33,595.78 581.09,586.62 583.64,574.90 C553.35,574.90 528.77,544.04 528.77,506.00 Z" fill="#fff"/>
<path d="M451.36,574.90 C453.91,586.62 466.67,595.78 476.88,596.20 M583.64,574.90 C581.09,586.62 568.33,595.78 558.12,596.20" fill="none" stroke="#8d8d8d" stroke-width="1.0"/>
<path d="M506.23,506.00 C506.23,544.04 481.65,574.90 451.36,574.90 M528.77,506.00 C528.77,544.04 553.35,574.90 583.64,574.90" fill="none" stroke="#8d8d8d" stroke-width="1.0"/>
<path d="M506.23,506.00 C506.23,544.04 481.65,574.90 451.36,574.90 M528.77,506.00 C528.77,544.04 553.35,574.90 583.64,574.90" fill="none" stroke="url(#gstroke)" stroke-width="2.8"/>
<path d="M509.15,506.00 C509.15,556.44 486.20,597.37 457.93,597.37 C460.42,610.04 472.86,619.95 482.81,620.42 L517.50,622.58 L552.19,620.42 C562.14,619.95 574.58,610.04 577.07,597.37 C548.80,597.37 525.85,556.44 525.85,506.00 Z" fill="#fff"/>
<path d="M457.93,597.37 C460.42,610.04 472.86,619.95 482.81,620.42 M577.07,597.37 C574.58,610.04 562.14,619.95 552.19,620.42" fill="none" stroke="#8d8d8d" stroke-width="1.0"/>
<path d="M509.15,506.00 C509.15,556.44 486.20,597.37 457.93,597.37 M525.85,506.00 C525.85,556.44 548.80,597.37 577.07,597.37" fill="none" stroke="#8d8d8d" stroke-width="1.0"/>
<path d="M509.15,506.00 C509.15,556.44 486.20,597.37 457.93,597.37 M525.85,506.00 C525.85,556.44 548.80,597.37 577.07,597.37" fill="none" stroke="url(#gstroke)" stroke-width="2.8"/>
<path d="M512.36,506.00 C512.36,569.91 491.41,621.78 465.60,621.78 C468.02,633.49 480.13,642.65 489.82,643.07 L517.50,645.23 L545.18,643.07 C554.87,642.65 566.98,633.49 569.40,621.78 C543.59,621.78 522.64,569.91 522.64,506.00 Z" fill="#fff"/>
<path d="M465.60,621.78 C468.02,633.49 480.13,642.65 489.82,643.07 M569.40,621.78 C566.98,633.49 554.87,642.65 545.18,643.07" fill="none" stroke="#8d8d8d" stroke-width="1.0"/>
<path d="M512.36,506.00 C512.36,569.91 491.41,621.78 465.60,621.78 M522.64,506.00 C522.64,569.91 543.59,621.78 569.40,621.78" fill="none" stroke="#8d8d8d" stroke-width="1.0"/>
<path d="M512.36,506.00 C512.36,569.91 491.41,621.78 465.60,621.78 M522.64,506.00 C522.64,569.91 543.59,621.78 569.40,621.78" fill="none" stroke="url(#gstroke)" stroke-width="2.8"/>
<path d="M515.28,506.00 C515.28,582.31 497.19,644.24 474.90,644.24 C487.68,651.20 513.24,674.05 517.50,693.92 C521.76,674.05 547.32,651.20 560.10,644.24 C537.81,644.24 519.72,582.31 519.72,506.00 Z" fill="#fff"/>
<path d="M474.90,644.24 C487.68,651.20 513.24,674.05 517.50,693.92 M560.10,644.24 C547.32,651.20 521.76,674.05 517.50,693.92" fill="none" stroke="#8d8d8d" stroke-width="1.0"/>
<path d="M474.90,644.24 C487.68,651.20 513.24,674.05 517.50,693.92" fill="none" stroke="#9b8274" stroke-width="3.2" stroke-linecap="round"/>
<path d="M515.28,506.00 C515.28,582.31 497.19,644.24 474.90,644.24" fill="none" stroke="#9b8274" stroke-width="2.72" stroke-linecap="round"/>
<path d="M515.28,506.00 C515.28,582.31 497.19,644.24 474.90,644.24 M519.72,506.00 C519.72,582.31 537.81,644.24 560.10,644.24" fill="none" stroke="#8d8d8d" stroke-width="1.0"/>
<path d="M515.28,506.00 C515.28,582.31 497.19,644.24 474.90,644.24 M519.72,506.00 C519.72,582.31 537.81,644.24 560.10,644.24" fill="none" stroke="url(#gstroke)" stroke-width="2.8"/>
<path d="M515.28,506.00 L519.72,506.00" fill="none" stroke="#8d8d8d" stroke-width="1.0"/>
<path d="M491 490.5 H545 Q549 491 547 494.5 L535.5 509.5 L533 534 L522 536 L518 528 L514 536 L502 534 L499.4 509.5 L489 494.5 Q487 491 491 490.5 Z" fill="#a68b7d"/>
<path d="M808.72,198.60 C808.72,213.14 777.86,224.93 739.83,224.93 C743.37,237.46 761.07,247.26 775.24,247.71 L825.50,250.02 L875.76,247.71 C889.93,247.26 907.63,237.46 911.17,224.93 C873.14,224.93 842.28,213.14 842.28,198.60 Z" fill="#131313"/>
<path d="M739.83,224.93 C743.37,237.46 761.07,247.26 775.24,247.71 M911.17,224.93 C907.63,237.46 889.93,247.26 875.76,247.71" fill="none" stroke="#8f8b7f" stroke-width="1.0"/>
<path d="M808.72,198.60 C808.72,213.14 777.86,224.93 739.83,224.93 M842.28,198.60 C842.28,213.14 873.14,224.93 911.17,224.93" fill="none" stroke="#8f8b7f" stroke-width="1.0"/>
<path d="M812.12,198.60 C812.12,226.40 783.01,248.96 747.15,248.96 C750.20,261.14 765.47,270.67 777.68,271.11 L825.50,273.42 L873.32,271.11 C885.53,270.67 900.80,261.14 903.85,248.96 C867.99,248.96 838.88,226.40 838.88,198.60 Z" fill="#131313"/>
<path d="M747.15,248.96 C750.20,261.14 765.47,270.67 777.68,271.11 M903.85,248.96 C900.80,261.14 885.53,270.67 873.32,271.11" fill="none" stroke="#8f8b7f" stroke-width="1.0"/>
<path d="M812.12,198.60 C812.12,226.40 783.01,248.96 747.15,248.96 M838.88,198.60 C838.88,226.40 867.99,248.96 903.85,248.96" fill="none" stroke="#8f8b7f" stroke-width="1.0"/>
<path d="M815.09,198.60 C815.09,239.28 787.83,272.29 754.23,272.29 C757.01,284.82 770.90,294.61 782.01,295.07 L825.50,297.38 L868.99,295.07 C880.10,294.61 893.99,284.82 896.77,272.29 C863.17,272.29 835.91,239.28 835.91,198.60 Z" fill="#131313"/>
<path d="M754.23,272.29 C757.01,284.82 770.90,294.61 782.01,295.07 M896.77,272.29 C893.99,284.82 880.10,294.61 868.99,295.07" fill="none" stroke="#8f8b7f" stroke-width="1.0"/>
<path d="M815.09,198.60 C815.09,239.28 787.83,272.29 754.23,272.29 M835.91,198.60 C835.91,239.28 863.17,272.29 896.77,272.29" fill="none" stroke="#8f8b7f" stroke-width="1.0"/>
<path d="M817.78,198.60 C817.78,252.54 792.48,296.31 761.31,296.31 C764.01,309.87 777.49,320.47 788.28,320.96 L825.50,323.27 L862.72,320.96 C873.51,320.47 886.99,309.87 889.69,296.31 C858.52,296.31 833.22,252.54 833.22,198.60 Z" fill="#131313"/>
<path d="M761.31,296.31 C764.01,309.87 777.49,320.47 788.28,320.96 M889.69,296.31 C886.99,309.87 873.51,320.47 862.72,320.96" fill="none" stroke="#8f8b7f" stroke-width="1.0"/>
<path d="M817.78,198.60 C817.78,252.54 792.48,296.31 761.31,296.31 M833.22,198.60 C833.22,252.54 858.52,296.31 889.69,296.31" fill="none" stroke="#8f8b7f" stroke-width="1.0"/>
<path d="M820.76,198.60 C820.76,266.95 797.82,322.42 769.57,322.42 C772.18,334.94 785.27,344.74 795.73,345.19 L825.50,347.50 L855.27,345.19 C865.73,344.74 878.82,334.94 881.43,322.42 C853.18,322.42 830.24,266.95 830.24,198.60 Z" fill="#131313"/>
<path d="M769.57,322.42 C772.18,334.94 785.27,344.74 795.73,345.19 M881.43,322.42 C878.82,334.94 865.73,344.74 855.27,345.19" fill="none" stroke="#8f8b7f" stroke-width="1.0"/>
<path d="M820.76,198.60 C820.76,266.95 797.82,322.42 769.57,322.42 M830.24,198.60 C830.24,266.95 853.18,322.42 881.43,322.42" fill="none" stroke="#8f8b7f" stroke-width="1.0"/>
<path d="M823.45,198.60 C823.45,280.21 803.80,346.44 779.60,346.44 C793.37,353.88 820.91,378.32 825.50,399.57 C830.09,378.32 857.63,353.88 871.40,346.44 C847.20,346.44 827.55,280.21 827.55,198.60 Z" fill="#131313"/>
<path d="M779.60,346.44 C793.37,353.88 820.91,378.32 825.50,399.57 M871.40,346.44 C857.63,353.88 830.09,378.32 825.50,399.57" fill="none" stroke="#8f8b7f" stroke-width="1.0"/>
<path d="M823.45,198.60 C823.45,280.21 803.80,346.44 779.60,346.44 M827.55,198.60 C827.55,280.21 847.20,346.44 871.40,346.44" fill="none" stroke="#8f8b7f" stroke-width="1.0"/>
<path d="M823.45,198.60 L827.55,198.60" fill="none" stroke="#8f8b7f" stroke-width="1.0"/>
<path d="M795.4 160.9 H854.8 L826 253.4 Z" fill="url(#gt)"/>
<path d="M795.4 160.9 H854.8 L826 253.4 Z" fill="url(#gtex)"/>
<path d="M799.68,477.80 C799.68,492.34 773.50,504.13 741.24,504.13 C744.55,516.66 761.10,526.46 774.34,526.91 L828.00,529.22 L881.66,526.91 C894.90,526.46 911.45,516.66 914.76,504.13 C882.50,504.13 856.32,492.34 856.32,477.80 Z" fill="#131313"/>
<path d="M741.24,504.13 C744.55,516.66 761.10,526.46 774.34,526.91 M914.76,504.13 C911.45,516.66 894.90,526.46 881.66,526.91" fill="none" stroke="#8f8b7f" stroke-width="1.0"/>
<path d="M799.68,477.80 C799.68,492.34 773.50,504.13 741.24,504.13 M856.32,477.80 C856.32,492.34 882.50,504.13 914.76,504.13" fill="none" stroke="#8f8b7f" stroke-width="1.0"/>
<path d="M805.41,477.80 C805.41,505.60 779.98,528.16 748.65,528.16 C751.57,540.34 766.15,549.87 777.82,550.31 L828.00,552.62 L878.18,550.31 C889.85,549.87 904.43,540.34 907.35,528.16 C876.02,528.16 850.59,505.60 850.59,477.80 Z" fill="#131313"/>
<path d="M748.65,528.16 C751.57,540.34 766.15,549.87 777.82,550.31 M907.35,528.16 C904.43,540.34 889.85,549.87 878.18,550.31" fill="none" stroke="#8f8b7f" stroke-width="1.0"/>
<path d="M805.41,477.80 C805.41,505.60 779.98,528.16 748.65,528.16 M850.59,477.80 C850.59,505.60 876.02,528.16 907.35,528.16" fill="none" stroke="#8f8b7f" stroke-width="1.0"/>
<path d="M810.43,477.80 C810.43,518.48 785.97,551.49 755.82,551.49 C758.52,564.02 772.02,573.81 782.81,574.27 L828.00,576.58 L873.19,574.27 C883.98,573.81 897.48,564.02 900.18,551.49 C870.03,551.49 845.57,518.48 845.57,477.80 Z" fill="#131313"/>
<path d="M755.82,551.49 C758.52,564.02 772.02,573.81 782.81,574.27 M900.18,551.49 C897.48,564.02 883.98,573.81 873.19,574.27" fill="none" stroke="#8f8b7f" stroke-width="1.0"/>
<path d="M810.43,477.80 C810.43,518.48 785.97,551.49 755.82,551.49 M845.57,477.80 C845.57,518.48 870.03,551.49 900.18,551.49" fill="none" stroke="#8f8b7f" stroke-width="1.0"/>
<path d="M814.97,477.80 C814.97,531.74 791.69,575.51 762.99,575.51 C765.66,589.07 778.99,599.67 789.66,600.16 L828.00,602.47 L866.34,600.16 C877.01,599.67 890.34,589.07 893.01,575.51 C864.31,575.51 841.03,531.74 841.03,477.80 Z" fill="#131313"/>
<path d="M762.99,575.51 C765.66,589.07 778.99,599.67 789.66,600.16 M893.01,575.51 C890.34,589.07 877.01,599.67 866.34,600.16" fill="none" stroke="#8f8b7f" stroke-width="1.0"/>
<path d="M814.97,477.80 C814.97,531.74 791.69,575.51 762.99,575.51 M841.03,477.80 C841.03,531.74 864.31,575.51 893.01,575.51" fill="none" stroke="#8f8b7f" stroke-width="1.0"/>
<path d="M819.99,477.80 C819.99,546.15 798.20,601.62 771.36,601.62 C773.98,614.14 787.10,623.94 797.60,624.39 L828.00,626.70 L858.40,624.39 C868.90,623.94 882.02,614.14 884.64,601.62 C857.80,601.62 836.01,546.15 836.01,477.80 Z" fill="#131313"/>
<path d="M771.36,601.62 C773.98,614.14 787.10,623.94 797.60,624.39 M884.64,601.62 C882.02,614.14 868.90,623.94 858.40,624.39" fill="none" stroke="#8f8b7f" stroke-width="1.0"/>
<path d="M819.99,477.80 C819.99,546.15 798.20,601.62 771.36,601.62 M836.01,477.80 C836.01,546.15 857.80,601.62 884.64,601.62" fill="none" stroke="#8f8b7f" stroke-width="1.0"/>
<path d="M824.53,477.80 C824.53,559.41 805.26,625.64 781.51,625.64 C795.46,633.08 823.35,657.52 828.00,678.77 C832.65,657.52 860.54,633.08 874.49,625.64 C850.74,625.64 831.47,559.41 831.47,477.80 Z" fill="#131313"/>
<path d="M781.51,625.64 C795.46,633.08 823.35,657.52 828.00,678.77 M874.49,625.64 C860.54,633.08 832.65,657.52 828.00,678.77" fill="none" stroke="#8f8b7f" stroke-width="1.0"/>
<path d="M824.53,477.80 C824.53,559.41 805.26,625.64 781.51,625.64 M831.47,477.80 C831.47,559.41 850.74,625.64 874.49,625.64" fill="none" stroke="#8f8b7f" stroke-width="1.0"/>
<path d="M824.53,477.80 L831.47,477.80" fill="none" stroke="#8f8b7f" stroke-width="1.0"/>
<clipPath id="capclip"><path d="M829 439 C836 439 845 451 852 464 C859 477 865 487 864 494 C862 501 845 504 828 504 C811 504 795 501 793.5 494 C793 487 799 477 806 464 C813 451 822 439 829 439 Z"/></clipPath>
<path d="M829 439 C836 439 845 451 852 464 C859 477 865 487 864 494 C862 501 845 504 828 504 C811 504 795 501 793.5 494 C793 487 799 477 806 464 C813 451 822 439 829 439 Z" fill="url(#gh)"/>
<g clip-path="url(#capclip)"><ellipse cx="837.3" cy="487.7" rx="4.9" ry="3.4" transform="rotate(133 837.3 487.7)" fill="#fffbe0" opacity="0.84"/><ellipse cx="849.0" cy="454.7" rx="2.7" ry="1.9" transform="rotate(67 849.0 454.7)" fill="#d8bc60" opacity="0.68"/><ellipse cx="797.8" cy="454.7" rx="4.7" ry="2.4" transform="rotate(33 797.8 454.7)" fill="#fff4c0" opacity="0.61"/><ellipse cx="850.6" cy="447.3" rx="4.4" ry="1.8" transform="rotate(0 850.6 447.3)" fill="#fffbe0" opacity="0.62"/><ellipse cx="806.4" cy="503.8" rx="5.1" ry="2.1" transform="rotate(173 806.4 503.8)" fill="#d8bc60" opacity="0.61"/><ellipse cx="863.6" cy="451.2" rx="5.4" ry="2.3" transform="rotate(4 863.6 451.2)" fill="#fff4c0" opacity="0.61"/><ellipse cx="801.1" cy="442.4" rx="3.4" ry="2.7" transform="rotate(1 801.1 442.4)" fill="#94782c" opacity="0.57"/><ellipse cx="817.0" cy="458.5" rx="4.6" ry="2.0" transform="rotate(85 817.0 458.5)" fill="#f0dc8c" opacity="0.57"/><ellipse cx="864.1" cy="439.5" rx="4.7" ry="3.2" transform="rotate(3 864.1 439.5)" fill="#fff4c0" opacity="0.68"/><ellipse cx="834.0" cy="438.6" rx="2.6" ry="1.9" transform="rotate(172 834.0 438.6)" fill="#d8bc60" opacity="0.59"/><ellipse cx="808.7" cy="492.9" rx="3.9" ry="2.6" transform="rotate(161 808.7 492.9)" fill="#b89a40" opacity="0.82"/><ellipse cx="798.2" cy="488.1" rx="4.9" ry="3.2" transform="rotate(7 798.2 488.1)" fill="#fbefb0" opacity="0.62"/><ellipse cx="829.0" cy="462.3" rx="2.9" ry="2.1" transform="rotate(126 829.0 462.3)" fill="#fbefb0" opacity="0.66"/><ellipse cx="814.1" cy="449.9" rx="2.7" ry="1.9" transform="rotate(124 814.1 449.9)" fill="#c8a850" opacity="0.61"/><ellipse cx="793.7" cy="504.1" rx="4.1" ry="2.4" transform="rotate(43 793.7 504.1)" fill="#94782c" opacity="0.84"/><ellipse cx="824.6" cy="466.3" rx="2.7" ry="3.3" transform="rotate(6 824.6 466.3)" fill="#c8a850" opacity="0.67"/><ellipse cx="805.7" cy="503.7" rx="4.2" ry="1.9" transform="rotate(161 805.7 503.7)" fill="#fff4c0" opacity="0.59"/><ellipse cx="823.0" cy="448.0" rx="5.0" ry="2.2" transform="rotate(82 823.0 448.0)" fill="#f0dc8c" opacity="0.89"/><ellipse cx="824.5" cy="470.7" rx="4.7" ry="2.5" transform="rotate(52 824.5 470.7)" fill="#fff4c0" opacity="0.87"/><ellipse cx="798.6" cy="493.1" rx="4.1" ry="1.9" transform="rotate(169 798.6 493.1)" fill="#94782c" opacity="0.61"/><ellipse cx="827.4" cy="472.5" rx="4.1" ry="2.6" transform="rotate(11 827.4 472.5)" fill="#94782c" opacity="0.79"/><ellipse cx="840.5" cy="488.9" rx="3.6" ry="2.9" transform="rotate(51 840.5 488.9)" fill="#c8a850" opacity="0.64"/><ellipse cx="864.6" cy="486.0" rx="5.4" ry="2.2" transform="rotate(32 864.6 486.0)" fill="#fffbe0" opacity="0.72"/><ellipse cx="848.8" cy="459.8" rx="3.3" ry="2.1" transform="rotate(90 848.8 459.8)" fill="#94782c" opacity="0.67"/><ellipse cx="838.9" cy="487.4" rx="5.0" ry="2.3" transform="rotate(152 838.9 487.4)" fill="#c8a850" opacity="0.89"/><ellipse cx="862.7" cy="472.7" rx="4.1" ry="1.9" transform="rotate(151 862.7 472.7)" fill="#c8a850" opacity="0.65"/><ellipse cx="796.0" cy="482.9" rx="3.7" ry="2.8" transform="rotate(169 796.0 482.9)" fill="#fff4c0" opacity="0.66"/><ellipse cx="832.0" cy="496.1" rx="3.3" ry="3.5" transform="rotate(35 832.0 496.1)" fill="#c8a850" opacity="0.77"/><ellipse cx="803.7" cy="488.9" rx="3.0" ry="3.0" transform="rotate(178 803.7 488.9)" fill="#d8bc60" opacity="0.61"/><ellipse cx="857.8" cy="445.4" rx="5.4" ry="2.5" transform="rotate(99 857.8 445.4)" fill="#fff4c0" opacity="0.71"/><ellipse cx="818.9" cy="479.0" rx="4.3" ry="2.1" transform="rotate(163 818.9 479.0)" fill="#fffbe0" opacity="0.67"/><ellipse cx="862.4" cy="495.3" rx="5.1" ry="2.9" transform="rotate(99 862.4 495.3)" fill="#fffbe0" opacity="0.74"/><ellipse cx="812.9" cy="457.8" rx="4.0" ry="3.4" transform="rotate(53 812.9 457.8)" fill="#94782c" opacity="0.84"/><ellipse cx="821.9" cy="492.5" rx="4.4" ry="2.3" transform="rotate(26 821.9 492.5)" fill="#fff4c0" opacity="0.75"/><ellipse cx="862.7" cy="502.9" rx="4.3" ry="2.3" transform="rotate(161 862.7 502.9)" fill="#fffbe0" opacity="0.68"/><ellipse cx="814.8" cy="499.4" rx="4.1" ry="2.2" transform="rotate(158 814.8 499.4)" fill="#fff4c0" opacity="0.70"/><ellipse cx="864.2" cy="471.1" rx="3.9" ry="2.9" transform="rotate(69 864.2 471.1)" fill="#f0dc8c" opacity="0.76"/><ellipse cx="809.7" cy="503.7" rx="4.0" ry="2.4" transform="rotate(57 809.7 503.7)" fill="#b89a40" opacity="0.72"/><ellipse cx="811.8" cy="470.0" rx="2.9" ry="2.8" transform="rotate(80 811.8 470.0)" fill="#b89a40" opacity="0.56"/><ellipse cx="800.4" cy="464.3" rx="3.9" ry="2.7" transform="rotate(44 800.4 464.3)" fill="#c8a850" opacity="0.82"/><ellipse cx="808.7" cy="455.9" rx="3.0" ry="3.5" transform="rotate(53 808.7 455.9)" fill="#c8a850" opacity="0.73"/><ellipse cx="855.6" cy="497.0" rx="5.2" ry="1.6" transform="rotate(23 855.6 497.0)" fill="#b89a40" opacity="0.74"/><ellipse cx="815.5" cy="457.9" rx="4.1" ry="2.5" transform="rotate(65 815.5 457.9)" fill="#f0dc8c" opacity="0.56"/><ellipse cx="809.2" cy="468.5" rx="5.2" ry="3.3" transform="rotate(98 809.2 468.5)" fill="#fffbe0" opacity="0.70"/><ellipse cx="851.4" cy="477.9" rx="4.6" ry="3.4" transform="rotate(117 851.4 477.9)" fill="#fff4c0" opacity="0.72"/><ellipse cx="841.9" cy="486.2" rx="5.2" ry="2.5" transform="rotate(136 841.9 486.2)" fill="#b89a40" opacity="0.84"/><ellipse cx="842.8" cy="467.0" rx="3.4" ry="3.1" transform="rotate(164 842.8 467.0)" fill="#f0dc8c" opacity="0.61"/><ellipse cx="842.8" cy="497.5" rx="5.4" ry="2.6" transform="rotate(77 842.8 497.5)" fill="#fffbe0" opacity="0.57"/><ellipse cx="807.5" cy="492.9" rx="4.9" ry="2.9" transform="rotate(5 807.5 492.9)" fill="#fff4c0" opacity="0.89"/><ellipse cx="865.9" cy="485.0" rx="2.6" ry="3.2" transform="rotate(39 865.9 485.0)" fill="#fbefb0" opacity="0.80"/><ellipse cx="800.2" cy="457.6" rx="5.3" ry="1.9" transform="rotate(110 800.2 457.6)" fill="#fff4c0" opacity="0.83"/><ellipse cx="795.1" cy="452.3" rx="4.2" ry="2.9" transform="rotate(134 795.1 452.3)" fill="#b89a40" opacity="0.57"/><ellipse cx="833.7" cy="487.7" rx="5.1" ry="1.9" transform="rotate(78 833.7 487.7)" fill="#94782c" opacity="0.79"/><ellipse cx="827.2" cy="461.7" rx="4.5" ry="3.3" transform="rotate(25 827.2 461.7)" fill="#b89a40" opacity="0.60"/><ellipse cx="838.0" cy="471.9" rx="5.2" ry="2.7" transform="rotate(112 838.0 471.9)" fill="#b89a40" opacity="0.57"/><ellipse cx="807.9" cy="493.8" rx="3.4" ry="3.5" transform="rotate(145 807.9 493.8)" fill="#94782c" opacity="0.71"/><ellipse cx="819.6" cy="446.8" rx="2.6" ry="2.2" transform="rotate(103 819.6 446.8)" fill="#fffbe0" opacity="0.58"/><ellipse cx="799.5" cy="477.8" rx="3.2" ry="3.3" transform="rotate(86 799.5 477.8)" fill="#94782c" opacity="0.59"/><ellipse cx="830.3" cy="474.3" rx="3.7" ry="3.2" transform="rotate(170 830.3 474.3)" fill="#fff4c0" opacity="0.79"/><ellipse cx="807.0" cy="445.8" rx="5.4" ry="2.9" transform="rotate(148 807.0 445.8)" fill="#f0dc8c" opacity="0.80"/><ellipse cx="818.6" cy="494.0" rx="3.4" ry="3.4" transform="rotate(127 818.6 494.0)" fill="#fff4c0" opacity="0.68"/><ellipse cx="844.9" cy="462.0" rx="3.4" ry="2.8" transform="rotate(173 844.9 462.0)" fill="#94782c" opacity="0.73"/><ellipse cx="835.0" cy="476.4" rx="4.7" ry="2.4" transform="rotate(17 835.0 476.4)" fill="#fffbe0" opacity="0.62"/><ellipse cx="804.9" cy="470.8" rx="5.3" ry="2.9" transform="rotate(63 804.9 470.8)" fill="#fff4c0" opacity="0.71"/><ellipse cx="857.6" cy="479.5" rx="3.8" ry="2.5" transform="rotate(18 857.6 479.5)" fill="#f0dc8c" opacity="0.78"/><ellipse cx="795.4" cy="496.2" rx="5.1" ry="2.5" transform="rotate(99 795.4 496.2)" fill="#fbefb0" opacity="0.65"/><ellipse cx="802.3" cy="457.2" rx="3.2" ry="2.5" transform="rotate(6 802.3 457.2)" fill="#94782c" opacity="0.66"/><ellipse cx="794.5" cy="439.5" rx="3.9" ry="3.2" transform="rotate(28 794.5 439.5)" fill="#94782c" opacity="0.65"/><ellipse cx="841.3" cy="486.9" rx="3.0" ry="2.0" transform="rotate(4 841.3 486.9)" fill="#d8bc60" opacity="0.78"/><ellipse cx="836.9" cy="499.1" rx="4.6" ry="2.9" transform="rotate(33 836.9 499.1)" fill="#94782c" opacity="0.65"/><ellipse cx="845.7" cy="486.1" rx="3.0" ry="2.1" transform="rotate(121 845.7 486.1)" fill="#fffbe0" opacity="0.78"/><ellipse cx="822.7" cy="503.4" rx="2.5" ry="1.7" transform="rotate(140 822.7 503.4)" fill="#fff4c0" opacity="0.61"/><ellipse cx="792.5" cy="494.0" rx="5.0" ry="2.7" transform="rotate(169 792.5 494.0)" fill="#fbefb0" opacity="0.63"/><ellipse cx="851.0" cy="444.2" rx="3.9" ry="2.9" transform="rotate(116 851.0 444.2)" fill="#c8a850" opacity="0.69"/><ellipse cx="794.6" cy="455.1" rx="3.7" ry="2.2" transform="rotate(9 794.6 455.1)" fill="#fffbe0" opacity="0.88"/><ellipse cx="804.8" cy="484.6" rx="4.4" ry="2.0" transform="rotate(42 804.8 484.6)" fill="#94782c" opacity="0.83"/><ellipse cx="796.6" cy="504.0" rx="3.0" ry="1.7" transform="rotate(131 796.6 504.0)" fill="#fffbe0" opacity="0.70"/><ellipse cx="817.2" cy="466.4" rx="4.8" ry="2.6" transform="rotate(24 817.2 466.4)" fill="#fffbe0" opacity="0.87"/><ellipse cx="813.4" cy="468.1" rx="5.0" ry="2.0" transform="rotate(21 813.4 468.1)" fill="#b89a40" opacity="0.72"/><ellipse cx="849.3" cy="455.7" rx="3.7" ry="1.9" transform="rotate(97 849.3 455.7)" fill="#c8a850" opacity="0.64"/><ellipse cx="796.4" cy="466.7" rx="4.2" ry="2.1" transform="rotate(11 796.4 466.7)" fill="#d8bc60" opacity="0.57"/><ellipse cx="805.2" cy="457.2" rx="3.6" ry="1.8" transform="rotate(76 805.2 457.2)" fill="#94782c" opacity="0.68"/><ellipse cx="848.5" cy="438.0" rx="3.4" ry="3.4" transform="rotate(24 848.5 438.0)" fill="#fffbe0" opacity="0.70"/><ellipse cx="852.1" cy="481.9" rx="5.4" ry="3.0" transform="rotate(126 852.1 481.9)" fill="#b89a40" opacity="0.59"/><ellipse cx="851.2" cy="475.6" rx="3.5" ry="2.2" transform="rotate(25 851.2 475.6)" fill="#c8a850" opacity="0.79"/><ellipse cx="811.7" cy="442.3" rx="4.8" ry="2.7" transform="rotate(5 811.7 442.3)" fill="#fffbe0" opacity="0.89"/><ellipse cx="852.8" cy="467.2" rx="3.3" ry="3.4" transform="rotate(3 852.8 467.2)" fill="#fff4c0" opacity="0.59"/><ellipse cx="805.3" cy="462.0" rx="3.0" ry="2.8" transform="rotate(29 805.3 462.0)" fill="#fbefb0" opacity="0.64"/><ellipse cx="836.1" cy="480.2" rx="2.9" ry="3.1" transform="rotate(78 836.1 480.2)" fill="#fff4c0" opacity="0.59"/><ellipse cx="814.1" cy="499.3" rx="3.9" ry="2.4" transform="rotate(79 814.1 499.3)" fill="#f0dc8c" opacity="0.74"/></g>
</svg>
<svg class="b" style="left:1158px;top:63px" width="8" height="6" viewBox="0 0 8 6"><path d="M3.5 0.5 L0.5 3 L3.5 5.5 Z M7.5 0.5 L4.5 3 L7.5 5.5 Z" fill="#d8d8d8"/></svg>
<svg class="b" style="left:1382px;top:63px" width="8" height="6" viewBox="0 0 8 6"><path d="M0.5 0.5 L3.5 3 L0.5 5.5 Z M4.5 0.5 L7.5 3 L4.5 5.5 Z" fill="#d8d8d8"/></svg>
<div class="t" style="left:1180px;top:106.2px;font-size:9.6px;color:#dedede;font-weight:normal;letter-spacing:-0.15px;">Auc. sélect.</div>
<div class="b" style="left:1172px;top:126px;width:228px;height:1px;background:#4e4e4e;"></div>
<div class="t" style="left:1180px;top:137.2px;font-size:9.6px;color:#dedede;font-weight:normal;letter-spacing:-0.2px;">Document</div>
<div class="t" style="left:1215.5px;top:162.7px;font-size:9.6px;color:#dedede;font-weight:normal;letter-spacing:-0.1px;">Unités :</div>
<div class="b" style="left:1253px;top:159px;width:111px;height:18px;background:#484848;"></div>
<div class="t" style="left:1258px;top:162.7px;font-size:9.6px;color:#f2f2f2;font-weight:bold;letter-spacing:-0.35px;">Millimètres</div>
<svg class="b" style="left:1351.5px;top:163.5px" width="9" height="9" viewBox="0 0 8 8"><path d="M1 2.6 L4 5.4 L7 2.6" fill="none" stroke="#e8e8e8" stroke-width="1.8"/></svg>
<div class="t" style="left:1184px;top:189.2px;font-size:9.6px;color:#dedede;font-weight:normal;letter-spacing:-0.15px;">Plan de travail :</div>
<div class="b" style="left:1253px;top:186px;width:49px;height:17px;background:#474747;"></div>
<div class="t" style="left:1256px;top:188.5px;font-size:10px;color:#f0f0f0;font-weight:normal;letter-spacing:0px;">7</div>
<div class="b" style="left:1303px;top:186px;width:15px;height:17px;background:#4d4d4d;"></div>
<svg class="b" style="left:1305.5px;top:189.5px" width="9" height="9" viewBox="0 0 8 8"><path d="M1 2.6 L4 5.4 L7 2.6" fill="none" stroke="#e8e8e8" stroke-width="1.8"/></svg>
<svg class="b" style="left:1330px;top:189px" width="8" height="10" viewBox="0 0 8 10"><path d="M7 0 V10 L1 5 Z" fill="#cfcfcf"/></svg>
<svg class="b" style="left:1349px;top:189px" width="8" height="10" viewBox="0 0 8 10"><path d="M1 0 V10 L7 5 Z" fill="#6a6a6a"/></svg>
<div class="b" style="left:1251px;top:211px;width:123px;height:20px;background:transparent;box-sizing:border-box;border:1px solid #686868;border-radius:2px;"></div>
<div class="t" style="left:1259px;top:215.2px;font-size:9.6px;color:#f0f0f0;font-weight:normal;letter-spacing:-0.15px;">Modif. les plans de travail</div>
<div class="b" style="left:1172px;top:243px;width:228px;height:1px;background:#4e4e4e;"></div>
<div class="t" style="left:1180px;top:255.2px;font-size:9.6px;color:#dedede;font-weight:normal;letter-spacing:-0.15px;">Règle et grilles</div>
<svg class="b" style="left:1261px;top:253px" width="17" height="17" viewBox="0 0 17 17"><path d="M1.5 16 V1.5 H16" fill="none" stroke="#d0d0d0" stroke-width="3"/><path d="M1 4 h3 M1 7 h3 M1 10 h3 M1 13 h3 M4 1 v3 M7 1 v3 M10 1 v3 M13 1 v3" stroke="#777" stroke-width="0.8"/></svg>
<svg class="b" style="left:1289px;top:253px" width="16" height="16" viewBox="0 0 16 16"><rect x="1" y="1" width="14" height="14" fill="none" stroke="#d0d0d0" stroke-width="1.3"/><path d="M5.7 1 V15 M10.3 1 V15 M1 5.7 H15 M1 10.3 H15" stroke="#d0d0d0" stroke-width="1.3"/></svg>
<svg class="b" style="left:1316px;top:253px" width="17" height="17" viewBox="0 0 17 17"><rect x="1" y="1" width="15" height="15" fill="#8a8a8a" stroke="#d0d0d0" stroke-width="1.3"/><path d="M1 1 L16 16 M16 1 L1 16 M8.5 1 L16 8.5 L8.5 16 L1 8.5 Z" stroke="#b0b0b0" stroke-width="1" fill="none"/></svg>
<div class="b" style="left:1172px;top:278px;width:228px;height:1px;background:#4e4e4e;"></div>
<div class="t" style="left:1180px;top:290.2px;font-size:9.6px;color:#dedede;font-weight:normal;letter-spacing:-0.2px;">Repères</div>
<svg class="b" style="left:1261px;top:287px" width="17" height="17" viewBox="0 0 17 17"><path d="M4 1 V16 M8 1 V16 M1 5 H16 M1 11 H16" stroke="#d0d0d0" stroke-width="1.4"/></svg>
<svg class="b" style="left:1289px;top:287px" width="17" height="17" viewBox="0 0 17 17"><path d="M4 1 V16 M8 1 V16 M1 5 H16 M1 11 H16" stroke="#6c6c6c" stroke-width="1.4"/><rect x="10" y="10" width="6" height="6" fill="#6c6c6c"/></svg>
<div class="b" style="left:1314px;top:284px;width:19px;height:20px;background:#2e2e2e;border-radius:2px;"></div>
<svg class="b" style="left:1315px;top:286px" width="17" height="17" viewBox="0 0 17 17"><path d="M4 1 V16 M1 6 H13" stroke="#d0d0d0" stroke-width="1.5"/><path d="M8 3 L4 6 L8 9" fill="none" stroke="#d0d0d0" stroke-width="1.4"/><path d="M13 8 L10 12.5 H12.5 L11 16.5 L15 11.5 H12.5 Z" fill="#d0d0d0"/></svg>
<div class="b" style="left:1172px;top:313px;width:228px;height:1px;background:#5a5a5a;"></div>
<div class="t" style="left:1180px;top:324.7px;font-size:9.6px;color:#dedede;font-weight:normal;letter-spacing:-0.2px;">Options du magnétisme</div>
<div class="b" style="left:1295px;top:320px;width:20px;height:19px;background:#2e2e2e;border-radius:2px;"></div>
<svg class="b" style="left:1297px;top:321px" width="17" height="17" viewBox="0 0 17 17"><path d="M3.5 2 V15" stroke="#d0d0d0" stroke-width="1.6"/><rect x="1.5" y="6.5" width="4" height="4" fill="#d0d0d0"/><path d="M7 5 H11.5 A3.5 3.5 0 0 1 11.5 12 H7" fill="none" stroke="#d0d0d0" stroke-width="2"/></svg>
<svg class="b" style="left:1324px;top:321px" width="17" height="17" viewBox="0 0 17 17"><path d="M3.5 1 V16" stroke="#d0d0d0" stroke-width="1.6"/><path d="M1 3 h5 M1 6 h5 M1 9 h5 M1 12 h5 M1 15 h5" stroke="#d0d0d0" stroke-width="0.8"/><path d="M8 5 H12 A3.5 3.5 0 0 1 12 12 H8" fill="none" stroke="#d0d0d0" stroke-width="2"/></svg>
<svg class="b" style="left:1352px;top:321px" width="17" height="17" viewBox="0 0 17 17"><rect x="1" y="2" width="4" height="3.5" fill="#d0d0d0"/><rect x="1" y="7" width="4" height="3.5" fill="#d0d0d0"/><rect x="1" y="12" width="4" height="3.5" fill="#d0d0d0"/><path d="M7.5 5 H11.5 A3.5 3.5 0 0 1 11.5 12 H7.5" fill="none" stroke="#d0d0d0" stroke-width="2"/></svg>
<div class="t" style="left:1180px;top:357.2px;font-size:9.6px;color:#dedede;font-weight:normal;letter-spacing:-0.2px;">Préférences</div>
<div class="t" style="left:1177px;top:380.2px;font-size:9.6px;color:#dedede;font-weight:normal;letter-spacing:-0.15px;">Incrément clavier :</div>
<div class="b" style="left:1259px;top:377px;width:53px;height:17px;background:#474747;"></div>
<div class="t" style="left:1263px;top:380.2px;font-size:9.6px;color:#f0f0f0;font-weight:normal;letter-spacing:-0.1px;">0,3528 mm</div>
<div class="b" style="left:1183px;top:406.5px;width:11px;height:11px;background:transparent;box-sizing:border-box;border:1px solid #b8b8b8;border-radius:1px;"></div>
<div class="t" style="left:1197px;top:406.2px;font-size:9.6px;color:#dedede;font-weight:normal;letter-spacing:-0.2px;">Utiliser les limites d'aperçu</div>
<div class="b" style="left:1183px;top:428.5px;width:11px;height:11px;background:transparent;box-sizing:border-box;border:1px solid #b8b8b8;border-radius:1px;"></div>
<div class="t" style="left:1197px;top:428.2px;font-size:9.6px;color:#dedede;font-weight:normal;letter-spacing:-0.2px;">Rayons d'arrondi</div>
<div class="b" style="left:1183px;top:450.5px;width:11px;height:11px;background:transparent;box-sizing:border-box;border:1px solid #b8b8b8;border-radius:1px;"></div>
<div class="t" style="left:1197px;top:450.2px;font-size:9.6px;color:#dedede;font-weight:normal;letter-spacing:-0.2px;">Mettre à l'échelle les contours et les effets</div>
<div class="b" style="left:1172px;top:478px;width:228px;height:1px;background:#4e4e4e;"></div>
<div class="t" style="left:1180px;top:491.2px;font-size:9.6px;color:#dedede;font-weight:normal;letter-spacing:-0.2px;">Sélections rapides</div>
<div class="b" style="left:1180px;top:513px;width:207px;height:19px;background:transparent;box-sizing:border-box;border:1px solid #676767;border-radius:2px;"></div>
<div class="t" style="left:1242px;top:517.2px;font-size:9.6px;color:#f0f0f0;font-weight:normal;letter-spacing:-0.15px;">Format de document</div>
<div class="b" style="left:1180px;top:541px;width:207px;height:19px;background:transparent;box-sizing:border-box;border:1px solid #676767;border-radius:2px;"></div>
<div class="t" style="left:1260px;top:545.2px;font-size:9.6px;color:#f0f0f0;font-weight:normal;letter-spacing:-0.15px;">Préférences</div>
<div class="b" style="left:1172px;top:568px;width:228px;height:1px;background:#555;"></div>
<div class="b" style="left:1143px;top:73px;width:18px;height:4px;background:repeating-linear-gradient(90deg,#6a6a6a 0 1px,transparent 1px 3px)"></div>
<div class="b" style="left:1143px;top:137px;width:18px;height:4px;background:repeating-linear-gradient(90deg,#6a6a6a 0 1px,transparent 1px 3px)"></div>
<div class="b" style="left:1143px;top:250px;width:18px;height:4px;background:repeating-linear-gradient(90deg,#6a6a6a 0 1px,transparent 1px 3px)"></div>
<div class="b" style="left:1143px;top:312px;width:18px;height:4px;background:repeating-linear-gradient(90deg,#6a6a6a 0 1px,transparent 1px 3px)"></div>
<div class="b" style="left:1143px;top:374px;width:18px;height:4px;background:repeating-linear-gradient(90deg,#6a6a6a 0 1px,transparent 1px 3px)"></div>
<div class="b" style="left:1137px;top:133px;width:30px;height:1px;background:#444;"></div>
<div class="b" style="left:1137px;top:248px;width:30px;height:1px;background:#444;"></div>
<div class="b" style="left:1137px;top:310px;width:30px;height:1px;background:#444;"></div>
<div class="b" style="left:1137px;top:372px;width:30px;height:1px;background:#444;"></div>
<div class="b" style="left:1137px;top:462px;width:30px;height:1px;background:#444;"></div>
<svg class="b" style="left:1143px;top:83px" width="18" height="18" viewBox="0 0 18 18"><path d="M9 2 C3 2 1 6 1 9 C1 13 4 15 7 14 C9 13 8 11 10 11 C13 11 17 10 17 7 C17 4 14 2 9 2 Z" fill="#d0d0d0"/><circle cx="5" cy="10" r="1.6" fill="#444"/><circle cx="7" cy="6" r="1.6" fill="#444"/><circle cx="11" cy="5" r="1.4" fill="#444"/><circle cx="14" cy="7" r="1.3" fill="#444"/></svg>
<svg class="b" style="left:1143px;top:109px" width="18" height="18" viewBox="0 0 18 18"><defs><linearGradient id="sg" x1="0" x2="1" y1="0" y2="1"><stop offset="0" stop-color="#111"/><stop offset="1" stop-color="#eee"/></linearGradient></defs><path d="M3 2 V16 H16 C16 8 11 2 3 2 Z" fill="url(#sg)" stroke="#ccc" stroke-width="0.8"/></svg>
<svg class="b" style="left:1143px;top:147px" width="18" height="18" viewBox="0 0 18 18"><rect x="1" y="3" width="16" height="12" fill="#888" stroke="#d0d0d0" stroke-width="1"/><rect x="2" y="4" width="6" height="4" fill="#d0d0d0"/><rect x="10" y="9" width="6" height="5" fill="#d0d0d0"/></svg>
<svg class="b" style="left:1143px;top:172px" width="18" height="18" viewBox="0 0 18 18"><path d="M4 9 L3 2 L6 7 M9 8 V1 M14 9 L15 2 L12 7" stroke="#d0d0d0" stroke-width="1.8" fill="none"/><rect x="4" y="9" width="10" height="8" fill="#d0d0d0"/><rect x="6" y="11" width="6" height="2" fill="#666"/></svg>
<svg class="b" style="left:1143px;top:197px" width="18" height="18" viewBox="0 0 18 18"><defs><linearGradient id="sg2" x1="0" x2="1"><stop offset="0" stop-color="#111"/><stop offset="1" stop-color="#e8e8e8"/></linearGradient></defs><rect x="1.5" y="3" width="15" height="12" fill="url(#sg2)" stroke="#ccc" stroke-width="1"/></svg>
<svg class="b" style="left:1143px;top:222px" width="18" height="18" viewBox="0 0 18 18"><circle cx="9" cy="5" r="3.6" fill="#d0d0d0"/><circle cx="5" cy="10" r="3.6" fill="#d0d0d0"/><circle cx="13" cy="10" r="3.6" fill="#d0d0d0"/><path d="M9 8 L7 17 H11 Z" fill="#d0d0d0"/></svg>
<svg class="b" style="left:1143px;top:261px" width="18" height="18" viewBox="0 0 18 18"><rect x="2" y="3" width="14" height="2.2" fill="#d0d0d0"/><rect x="2" y="8" width="14" height="2.2" fill="#d0d0d0"/><rect x="2" y="13" width="14" height="2.2" fill="#d0d0d0"/></svg>
<svg class="b" style="left:1143px;top:286px" width="18" height="18" viewBox="0 0 18 18"><circle cx="7" cy="7" r="5.5" fill="#d0d0d0"/><circle cx="11" cy="11" r="5.5" fill="#7a7a7a" stroke="#d0d0d0" stroke-width="1"/></svg>
<svg class="b" style="left:1143px;top:322px" width="18" height="18" viewBox="0 0 18 18"><circle cx="9" cy="9" r="5.5" fill="#d0d0d0"/><circle cx="9" cy="9" r="7.8" fill="none" stroke="#d0d0d0" stroke-width="1.2" stroke-dasharray="1.4 1.4"/></svg>
<svg class="b" style="left:1143px;top:348px" width="18" height="18" viewBox="0 0 18 18"><rect x="6" y="2" width="10" height="10" fill="#777" stroke="#d0d0d0" stroke-width="1.2"/><rect x="2" y="9" width="6" height="6" fill="none" stroke="#d0d0d0" stroke-width="1.2"/></svg>
<svg class="b" style="left:1143px;top:385px" width="18" height="18" viewBox="0 0 18 18"><path d="M9 2 L16 6 L9 10 L2 6 Z" fill="#d0d0d0"/><path d="M2 10 L9 14 L16 10" fill="none" stroke="#d0d0d0" stroke-width="1.8"/></svg>
<svg class="b" style="left:1143px;top:411px" width="18" height="18" viewBox="0 0 18 18"><path d="M8 3 H2 V16 H15 V10" fill="none" stroke="#d0d0d0" stroke-width="1.6"/><path d="M7 11 L15 3 M10 3 H15 V8" fill="none" stroke="#d0d0d0" stroke-width="1.6"/></svg>
<svg class="b" style="left:1143px;top:437px" width="18" height="18" viewBox="0 0 18 18"><rect x="1.5" y="1.5" width="10" height="10" fill="none" stroke="#d0d0d0" stroke-width="1.2"/><rect x="6" y="7" width="11" height="9" fill="#777" stroke="#d0d0d0" stroke-width="1.2"/></svg>
<div class="b" style="left:70px;top:739px;width:55px;height:11px;background:#444;"></div>
<div class="t" style="left:74px;top:739.2px;font-size:9.6px;color:#d8d8d8;font-weight:normal;letter-spacing:0px;">50%</div>
<svg class="b" style="left:121.0px;top:741.0px" width="8" height="8" viewBox="0 0 8 8"><path d="M1 2.6 L4 5.4 L7 2.6" fill="none" stroke="#d8d8d8" stroke-width="1.5"/></svg>
<div class="b" style="left:136px;top:739px;width:52px;height:11px;background:#444;"></div>
<div class="t" style="left:140px;top:739.2px;font-size:9.6px;color:#d8d8d8;font-weight:normal;letter-spacing:0px;">0°</div>
<svg class="b" style="left:187.0px;top:741.0px" width="8" height="8" viewBox="0 0 8 8"><path d="M1 2.6 L4 5.4 L7 2.6" fill="none" stroke="#d8d8d8" stroke-width="1.5"/></svg>
<svg class="b" style="left:207px;top:739px" width="10" height="10" viewBox="0 0 10 10"><rect x="1" y="1" width="1.8" height="8" fill="#cfcfcf"/><path d="M9 1 V9 L3.5 5 Z" fill="#cfcfcf"/></svg>
<svg class="b" style="left:222px;top:739px" width="8" height="10" viewBox="0 0 8 10"><path d="M7 1 V9 L1.5 5 Z" fill="#cfcfcf"/></svg>
<div class="b" style="left:236px;top:739px;width:52px;height:11px;background:#444;"></div>
<div class="t" style="left:240px;top:739.2px;font-size:9.6px;color:#d8d8d8;font-weight:normal;letter-spacing:0px;">7</div>
<svg class="b" style="left:278.0px;top:741.0px" width="8" height="8" viewBox="0 0 8 8"><path d="M1 2.6 L4 5.4 L7 2.6" fill="none" stroke="#d8d8d8" stroke-width="1.5"/></svg>
<svg class="b" style="left:300px;top:739px" width="8" height="10" viewBox="0 0 8 10"><path d="M1 1 V9 L6.5 5 Z" fill="#6a6a6a"/></svg>
<svg class="b" style="left:312px;top:739px" width="10" height="10" viewBox="0 0 10 10"><path d="M1 1 V9 L6.5 5 Z" fill="#6a6a6a"/><rect x="7" y="1" width="1.8" height="8" fill="#6a6a6a"/></svg>
<div class="t" style="left:402px;top:739.7px;font-size:9.6px;color:#cfcfcf;font-weight:normal;letter-spacing:-0.15px;">Sélection</div>
<svg class="b" style="left:516px;top:740px" width="8" height="10" viewBox="0 0 8 10"><path d="M1 1 V9 L6.5 5 Z" fill="#cfcfcf"/></svg>
<div class="b" style="left:528px;top:736px;width:590px;height:14px;background:#4c4c4c;"></div>
<svg class="b" style="left:531px;top:738px" width="6" height="8" viewBox="0 0 6 8"><path d="M5 1 L1.5 4 L5 7" fill="none" stroke="#aaa" stroke-width="1.2"/></svg>
<div class="b" style="left:922px;top:739px;width:24px;height:10px;background:#5c5c5c;border-radius:5px;"></div>
<svg class="b" style="left:1107px;top:738px" width="6" height="8" viewBox="0 0 6 8"><path d="M1 1 L4.5 4 L1 7" fill="none" stroke="#aaa" stroke-width="1.2"/></svg>
<svg class="b" style="left:1121px;top:89px" width="10" height="8" viewBox="0 0 10 8"><path d="M1.5 6 L5 2.5 L8.5 6" fill="none" stroke="#bbb" stroke-width="1.5"/></svg>
<svg class="b" style="left:1121px;top:723px" width="10" height="8" viewBox="0 0 10 8"><path d="M1.5 2 L5 5.5 L8.5 2" fill="none" stroke="#bbb" stroke-width="1.5"/></svg>
<div class="b" style="left:1119px;top:400px;width:13px;height:22px;background:#5c5c5c;border-radius:6px;"></div>
</body></html>
